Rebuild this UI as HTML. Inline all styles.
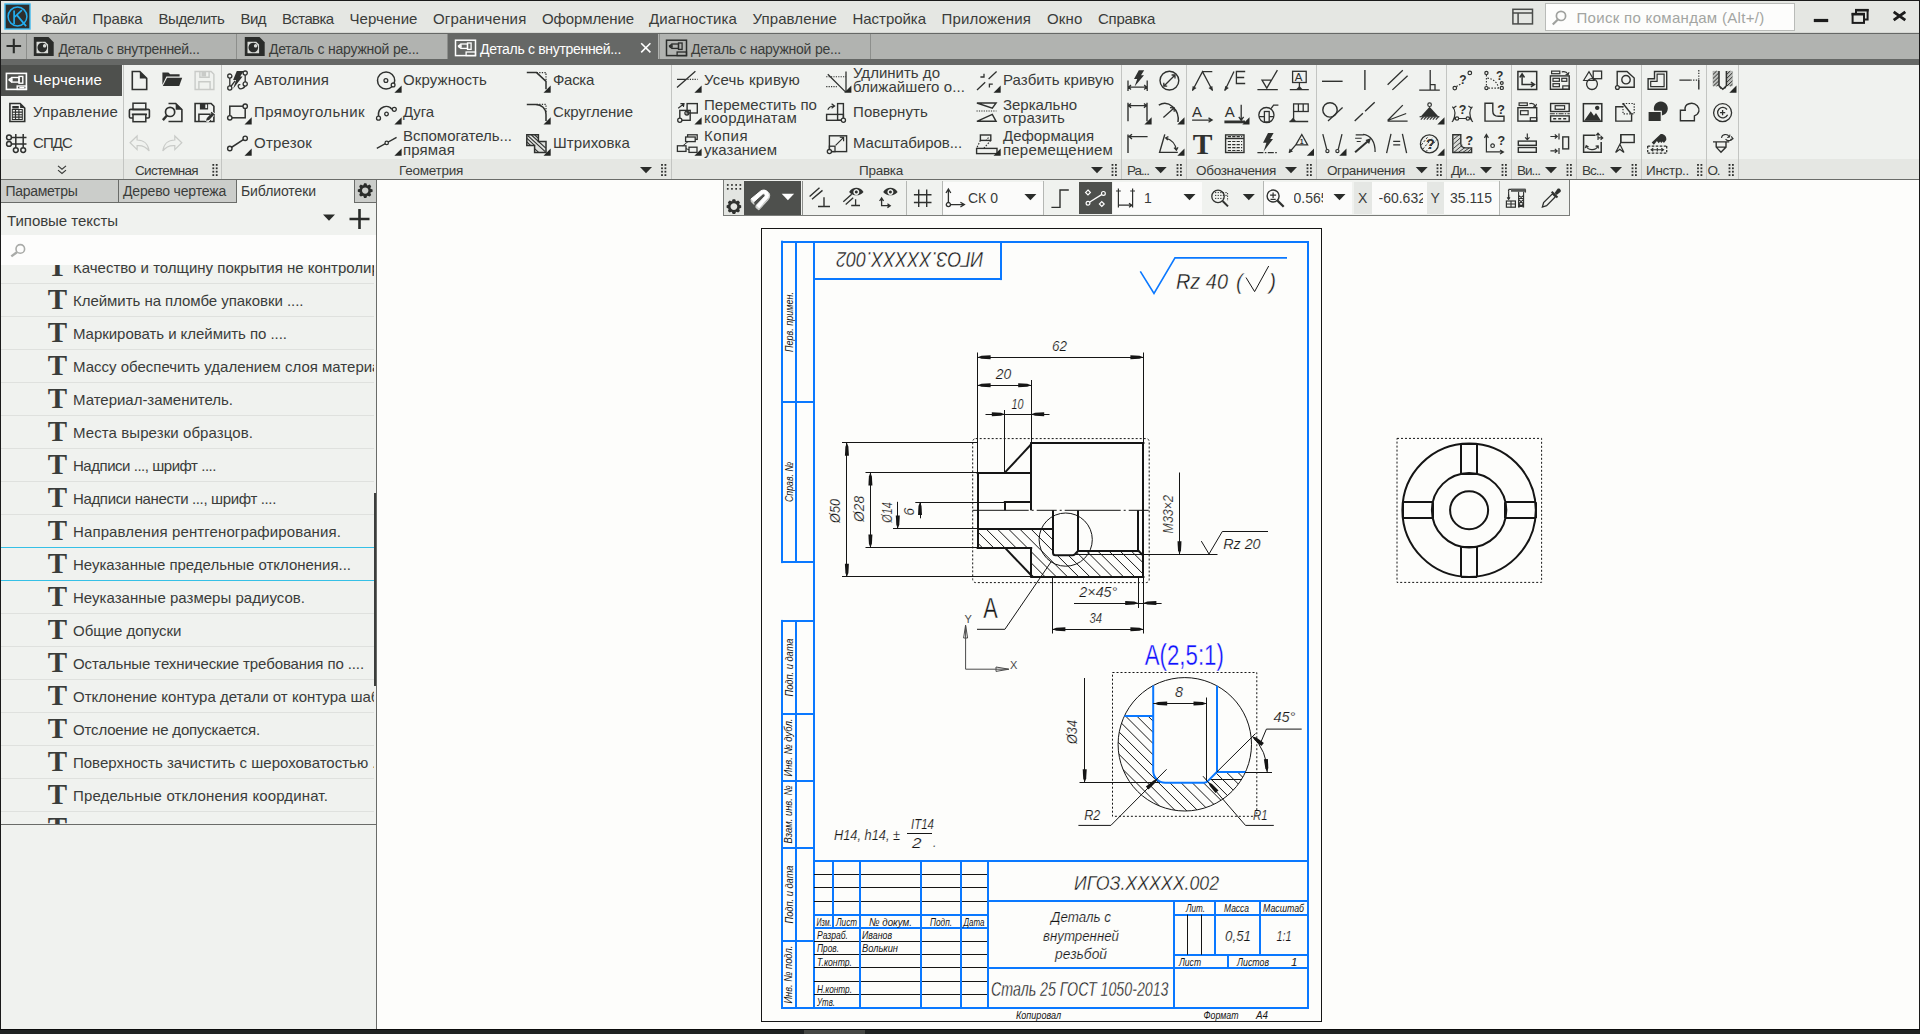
<!DOCTYPE html>
<html lang="ru"><head><meta charset="utf-8"><title>КОМПАС-3D</title>
<style>

html,body{margin:0;padding:0;}
body{width:1920px;height:1034px;overflow:hidden;position:relative;background:#fdfdfb;font-family:"Liberation Sans",sans-serif;}
.b{position:absolute;box-sizing:border-box;}
.t{position:absolute;white-space:pre;font-family:"Liberation Sans",sans-serif;}
.ic{position:absolute;overflow:visible;}
svg{display:block;}

</style></head>
<body>
<div class="b" style="left:0px;top:0px;width:1920px;height:34px;background:#e5e7e3;"></div>
<div class="b" style="left:0px;top:0px;width:1920px;height:1px;background:#1a1a1a;"></div>
<div class="b" style="left:0px;top:32px;width:1920px;height:1px;background:#d5d7d3;"></div>
<div class="b" style="left:0px;top:33px;width:1920px;height:1px;background:#666866;"></div>
<div class="b" style="left:1545px;top:3px;width:250px;height:28px;background:#fdfdfc;border:1px solid #b9bbb8;"></div>
<div class="b" style="left:0px;top:34px;width:1920px;height:25px;background:#b1b3b0;"></div>
<div class="b" style="left:447px;top:34px;width:211px;height:25px;background:#666866;"></div>
<div class="b" style="left:26px;top:34px;width:1px;height:25px;background:#8d8f8c;"></div>
<div class="b" style="left:236px;top:34px;width:1px;height:25px;background:#8d8f8c;"></div>
<div class="b" style="left:447px;top:34px;width:1px;height:25px;background:#8d8f8c;"></div>
<div class="b" style="left:659px;top:34px;width:1px;height:25px;background:#8d8f8c;"></div>
<div class="b" style="left:870px;top:34px;width:1px;height:25px;background:#8d8f8c;"></div>
<div class="b" style="left:0px;top:59px;width:1920px;height:6px;background:#666866;"></div>
<div class="b" style="left:0px;top:65px;width:1920px;height:115px;background:#f0f2ef;"></div>
<div class="b" style="left:0px;top:159px;width:1920px;height:20px;background:#e5e7e3;"></div>
<div class="b" style="left:1px;top:65px;width:121px;height:31px;background:#4e504d;"></div>
<div class="b" style="left:123px;top:65px;width:1px;height:114px;background:#c3c5c2;"></div>
<div class="b" style="left:221px;top:65px;width:1px;height:114px;background:#c3c5c2;"></div>
<div class="b" style="left:671px;top:65px;width:1px;height:114px;background:#c3c5c2;"></div>
<div class="b" style="left:1121px;top:65px;width:1px;height:114px;background:#c3c5c2;"></div>
<div class="b" style="left:1186px;top:65px;width:1px;height:114px;background:#c3c5c2;"></div>
<div class="b" style="left:1316px;top:65px;width:1px;height:114px;background:#c3c5c2;"></div>
<div class="b" style="left:1446px;top:65px;width:1px;height:114px;background:#c3c5c2;"></div>
<div class="b" style="left:1511px;top:65px;width:1px;height:114px;background:#c3c5c2;"></div>
<div class="b" style="left:1576px;top:65px;width:1px;height:114px;background:#c3c5c2;"></div>
<div class="b" style="left:1641px;top:65px;width:1px;height:114px;background:#c3c5c2;"></div>
<div class="b" style="left:1706px;top:65px;width:1px;height:114px;background:#c3c5c2;"></div>
<div class="b" style="left:1738px;top:65px;width:1px;height:114px;background:#c3c5c2;"></div>
<div class="b" style="left:0px;top:179px;width:1920px;height:1px;background:#6a6c69;"></div>
<div class="b" style="left:0px;top:180px;width:377px;height:849px;background:#f0f2ef;"></div>
<div class="b" style="left:0px;top:180px;width:377px;height:22px;background:#cbcdca;"></div>
<div class="b" style="left:237px;top:180px;width:117px;height:23px;background:#f0f2ef;"></div>
<div class="b" style="left:118px;top:180px;width:1px;height:22px;background:#6a6c69;"></div>
<div class="b" style="left:236px;top:180px;width:1px;height:22px;background:#6a6c69;"></div>
<div class="b" style="left:354px;top:180px;width:1px;height:22px;background:#6a6c69;"></div>
<div class="b" style="left:0px;top:202px;width:237px;height:1px;background:#6a6c69;"></div>
<div class="b" style="left:354px;top:202px;width:23px;height:1px;background:#6a6c69;"></div>
<div class="b" style="left:1px;top:235px;width:375px;height:30px;background:#fdfdfc;z-index:3;"></div>
<div class="b" style="left:1px;top:283px;width:373px;height:1px;background:#dfe1de;"></div>
<div class="b" style="left:1px;top:316px;width:373px;height:1px;background:#dfe1de;"></div>
<div class="b" style="left:1px;top:349px;width:373px;height:1px;background:#dfe1de;"></div>
<div class="b" style="left:1px;top:382px;width:373px;height:1px;background:#dfe1de;"></div>
<div class="b" style="left:1px;top:415px;width:373px;height:1px;background:#dfe1de;"></div>
<div class="b" style="left:1px;top:448px;width:373px;height:1px;background:#dfe1de;"></div>
<div class="b" style="left:1px;top:481px;width:373px;height:1px;background:#dfe1de;"></div>
<div class="b" style="left:1px;top:514px;width:373px;height:1px;background:#dfe1de;"></div>
<div class="b" style="left:1px;top:547px;width:373px;height:1px;background:#35c0e6;"></div>
<div class="b" style="left:1px;top:580px;width:373px;height:1px;background:#35c0e6;"></div>
<div class="b" style="left:1px;top:613px;width:373px;height:1px;background:#dfe1de;"></div>
<div class="b" style="left:1px;top:646px;width:373px;height:1px;background:#dfe1de;"></div>
<div class="b" style="left:1px;top:679px;width:373px;height:1px;background:#dfe1de;"></div>
<div class="b" style="left:1px;top:712px;width:373px;height:1px;background:#dfe1de;"></div>
<div class="b" style="left:1px;top:745px;width:373px;height:1px;background:#dfe1de;"></div>
<div class="b" style="left:1px;top:778px;width:373px;height:1px;background:#dfe1de;"></div>
<div class="b" style="left:1px;top:811px;width:373px;height:1px;background:#dfe1de;"></div>
<div class="b" style="left:374px;top:265px;width:2px;height:559px;background:#f0f2ef;"></div>
<div class="b" style="left:374px;top:493px;width:2px;height:193px;background:#3c3e3c;"></div>
<div class="b" style="left:0px;top:824px;width:377px;height:1px;background:#6a6c69;"></div>
<div class="b" style="left:376px;top:180px;width:1px;height:849px;background:#6a6c69;"></div>
<div class="b" style="left:0px;top:0px;width:1px;height:1029px;background:#1a1a1a;"></div>
<div class="b" style="left:1919px;top:0px;width:1px;height:1029px;background:#1a1a1a;"></div>
<div class="b" style="left:0px;top:1029px;width:1920px;height:5px;background:#1f2223;"></div>
<div class="b" style="left:0px;top:1029px;width:1920px;height:1px;background:#0c0c0c;"></div>
<div class="b" style="left:804px;top:1030px;width:61px;height:4px;background:#454745;"></div>
<div class="b" style="left:723px;top:180px;width:847px;height:36px;background:#f0f2ef;border-left:1px solid #7a7c79;border-right:1px solid #7a7c79;border-bottom:1px solid #7a7c79;z-index:5;"></div>
<div class="b" style="left:724px;top:180px;width:20px;height:35px;background:#e3e5e1;z-index:6;"></div>
<div class="b" style="left:744px;top:181px;width:57px;height:34px;background:#4e504d;z-index:6;"></div>
<div class="b" style="left:802px;top:181px;width:1px;height:34px;background:#8d8f8c;z-index:6;"></div>
<div class="b" style="left:1079px;top:182px;width:33px;height:32px;background:#4e504d;z-index:6;"></div>
<div class="b" style="left:906px;top:181px;width:1px;height:34px;background:#b5b7b4;z-index:6;"></div>
<div class="b" style="left:942px;top:181px;width:1px;height:34px;background:#b5b7b4;z-index:6;"></div>
<div class="b" style="left:1043px;top:181px;width:1px;height:34px;background:#b5b7b4;z-index:6;"></div>
<div class="b" style="left:1263px;top:181px;width:1px;height:34px;background:#b5b7b4;z-index:6;"></div>
<div class="b" style="left:1499px;top:181px;width:1px;height:34px;background:#b5b7b4;z-index:6;"></div>
<div class="b" style="left:943px;top:182px;width:100px;height:32px;background:#fbfbfa;z-index:6;"></div>
<div class="b" style="left:1113px;top:182px;width:89px;height:32px;background:#fbfbfa;z-index:6;"></div>
<div class="b" style="left:1203px;top:182px;width:60px;height:32px;background:#f0f2ef;z-index:6;"></div>
<div class="b" style="left:1264px;top:182px;width:88px;height:32px;background:#fbfbfa;z-index:6;"></div>
<div class="b" style="left:1354px;top:182px;width:18px;height:32px;background:#e5e7e4;z-index:6;"></div>
<div class="b" style="left:1372px;top:182px;width:55px;height:32px;background:#fbfbfa;z-index:6;"></div>
<div class="b" style="left:1427px;top:182px;width:17px;height:32px;background:#e5e7e4;z-index:6;"></div>
<div class="b" style="left:1444px;top:182px;width:55px;height:32px;background:#fbfbfa;z-index:6;"></div>
<svg class="b" style="left:0;top:0;z-index:2" width="1920" height="182" viewBox="0 0 1920 182"><g transform="translate(17.5 16.5)"><rect x="-12.5" y="-12.5" width="25" height="25" fill="#2d2f2e" stroke="#3db8ee" stroke-width="1.4"/><circle cx="0" cy="0" r="9.4" stroke="#23aef0" stroke-width="1.5" fill="none"/><path d="M-3.4 -6 V7.6 M-3.4 1 L4.4 -6.4 M-0.6 -1.4 L8.6 9.6" stroke="#23aef0" stroke-width="1.7" fill="none" /></g><g transform="translate(1522.5 16.5)"><rect x="-9.6" y="-7.2" width="19.6" height="14.6" stroke="#4a4c4a" stroke-width="1.5" fill="none" /><path d="M-9.6 -3.4 H10 M-4.4 -3.4 V7.4" stroke="#4a4c4a" stroke-width="1.5" fill="none" /></g><g transform="translate(1559 17.5)"><circle cx="2" cy="-1.6" r="4.6" stroke="#9fa19e" stroke-width="1.7" fill="none"/><path d="M-1.4 2.2 L-6.2 7" stroke="#9fa19e" stroke-width="2.2" fill="none" /></g><g transform="translate(1821 20.5)"><path d="M-7.2 -1.6 H7.2 V1.6 H-7.2 Z" fill="#1c1c1c"/></g><g transform="translate(1860 16.5)"><rect x="-7.4" y="-2.6" width="11.4" height="9" stroke="#1c1c1c" stroke-width="2" fill="none" /><path d="M-4 -3 V-6.6 H7.6 V3 H4.6" stroke="#1c1c1c" stroke-width="2" fill="none" /><path d="M-5 -7.6 H8.6 V-5 H-5 Z" fill="#1c1c1c"/><path d="M-8.4 -3.6 H5 V-1 H-8.4 Z" fill="#1c1c1c"/></g><g transform="translate(1899.5 16)"><path d="M-5.8 -4.2 L5.8 4.2 M5.8 -4.2 L-5.8 4.2" stroke="#1c1c1c" stroke-width="2.8" fill="none" /></g><g transform="translate(13.8 46)"><path d="M-7.3 0 H7.3 M0 -7.3 V7.3" stroke="#2a2c2a" stroke-width="2.1" fill="none" /></g><g transform="translate(43.7 46.5)"><path d="M-9.9 -9.5 H4.8 L10 -4.3 V9.5 H-9.9 Z" fill="#2a2c2a"/><path d="M-7.2 -4.8 H1.6 L4.4 -2 V6.8 H-7.2 Z" fill="#d9dbd8"/><path d="M-1.4 -3.8 a4.8 4.8 0 1 0 0.01 0 Z" fill="#2a2c2a"/><path d="M0.9 -2.4 a1.7 1.7 0 1 0 0.01 0 Z" fill="#d9dbd8"/></g><g transform="translate(254.7 46.5)"><path d="M-9.9 -9.5 H4.8 L10 -4.3 V9.5 H-9.9 Z" fill="#2a2c2a"/><path d="M-7.2 -4.8 H1.6 L4.4 -2 V6.8 H-7.2 Z" fill="#d9dbd8"/><path d="M-1.4 -3.8 a4.8 4.8 0 1 0 0.01 0 Z" fill="#2a2c2a"/><path d="M0.9 -2.4 a1.7 1.7 0 1 0 0.01 0 Z" fill="#d9dbd8"/></g><g transform="translate(465.5 47.8)"><rect x="-10" y="-7.6" width="20" height="15.4" stroke="#ffffff" stroke-width="1.5" fill="none" /><path d="M-7.6 -1.6 L-4.8 -3.6 M-7.6 -1.6 L-4.8 0.4 M-7.6 -1.6 H-4" stroke="#ffffff" stroke-width="1.2" fill="none" /><rect x="-4.6" y="-3.8" width="6.6" height="4.4" stroke="#ffffff" stroke-width="1.3" fill="none" /><rect x="2" y="-4.8" width="3.6" height="6.4" stroke="#ffffff" stroke-width="1.3" fill="none" /><rect x="0.6" y="4.2" width="9.4" height="3.6" stroke="#ffffff" stroke-width="1.3" fill="none" /></g><g transform="translate(676.5 47.8)"><rect x="-10" y="-7.6" width="20" height="15.4" stroke="#2a2c2a" stroke-width="1.5" fill="none" /><path d="M-7.6 -1.6 L-4.8 -3.6 M-7.6 -1.6 L-4.8 0.4 M-7.6 -1.6 H-4" stroke="#2a2c2a" stroke-width="1.2" fill="none" /><rect x="-4.6" y="-3.8" width="6.6" height="4.4" stroke="#2a2c2a" stroke-width="1.3" fill="none" /><rect x="2" y="-4.8" width="3.6" height="6.4" stroke="#2a2c2a" stroke-width="1.3" fill="none" /><rect x="0.6" y="4.2" width="9.4" height="3.6" stroke="#2a2c2a" stroke-width="1.3" fill="none" /></g><g transform="translate(645.8 47.8)"><path d="M-4.6 -4.6 L4.6 4.6 M4.6 -4.6 L-4.6 4.6" stroke="#ffffff" stroke-width="1.6" fill="none" /></g><g transform="translate(16.4 81.4)"><rect x="-10" y="-8" width="20" height="16" stroke="#ffffff" stroke-width="1.6" fill="none" /><path d="M-7.8 -1.6 L-4.6 -3.9 M-7.8 -1.6 L-4.6 0.7 M-7.8 -1.6 L-4 -1.6" stroke="#ffffff" stroke-width="1.3" fill="none" /><rect x="-4.6" y="-3.9" width="7.2" height="4.6" stroke="#ffffff" stroke-width="1.4" fill="none" /><rect x="2.6" y="-5" width="3.8" height="6.8" stroke="#ffffff" stroke-width="1.4" fill="none" /><rect x="0.8" y="4.6" width="9.2" height="3.4" stroke="#ffffff" stroke-width="1.4" fill="none" /><path d="M3 6.3 L8 6.3" stroke="#ffffff" stroke-width="1.4" fill="none" /></g><g transform="translate(17.3 112.5)"><path d="M-7.4 -9 L2.8 -9 L7.4 -4.4 L7.4 9 L-7.4 9 Z" stroke="#2f312f" stroke-width="1.6" fill="none" /><path d="M2.8 -9 L7.4 -4.4 L2.8 -4.4 Z" fill="#2f312f"/><path d="M-5 -6.5 H1.5 V-4 H-5 Z" fill="#2f312f"/><rect x="-5" y="-3" width="10" height="10" stroke="#2f312f" stroke-width="1" fill="none" /><path d="M-5 -0.4 H5 M-5 2.2 H5 M-5 4.6 H5 M-1.8 -3 V7 M1.6 -3 V7" stroke="#2f312f" stroke-width="1.1" fill="none" /></g><g transform="translate(16.5 143.3)"><path d="M-0.7 -9.3 V4.3 M6.7 -9.3 V4.3 M-5 -5.9 H10 M-5 0.6 H10" stroke="#2f312f" stroke-width="1.5" fill="none" /><circle cx="-7.5" cy="-5.9" r="2.4" stroke="#2f312f" stroke-width="1.5" fill="none"/><circle cx="-7.5" cy="0.6" r="2.4" stroke="#2f312f" stroke-width="1.5" fill="none"/><circle cx="-0.7" cy="6.8" r="2.4" stroke="#2f312f" stroke-width="1.5" fill="none"/><circle cx="6.7" cy="6.8" r="2.4" stroke="#2f312f" stroke-width="1.5" fill="none"/></g><g transform="translate(62 169.5)"><path d="M-4 -3.6 L0 -0.2 L4 -3.6 M-4 0.6 L0 4 L4 0.6" stroke="#3a3c3a" stroke-width="1.2" fill="none" /></g><g transform="translate(139.5 80.5)"><path d="M-7.2 -9 L0.3 -9 L7.2 -2.1 L7.2 9 L-7.2 9 Z" stroke="#2f312f" stroke-width="1.6" fill="none" /><path d="M0.3 -9 L7.2 -2.1 L0.3 -2.1 Z" fill="#2f312f"/></g><g transform="translate(172 79.2)"><path d="M-9.6 -6.8 L-3.6 -6.8 L-1.8 -4.9 L7.6 -4.9 L7.6 -2.6 L-5.6 -2.6 L-9.6 5.6 Z" fill="#2f312f"/><path d="M-4.9 -1.4 L10.2 -1.4 L7.2 6.7 L-9.2 6.7 Z" fill="#2f312f"/></g><g transform="translate(204.5 80.5)"><path d="M-9.4 -9 L6.6 -9 L9.4 -6.2 L9.4 9 L-9.4 9 Z" stroke="#c9cbc8" stroke-width="1.4" fill="none" /><path d="M-4.6 -9 V-3.2 H4.6 V-9" stroke="#c9cbc8" stroke-width="1.4" fill="none" /><path d="M-3 -9 H1.6 V-4 H-3 Z" fill="#c9cbc8"/><path d="M-5.6 9 V1.2 H5.6 V9" stroke="#c9cbc8" stroke-width="1.4" fill="none" /></g><g transform="translate(139.4 112.4)"><rect x="-6.4" y="-9.2" width="12.8" height="6.4" stroke="#2f312f" stroke-width="1.5" fill="none" /><rect x="-10" y="-3" width="20" height="8.6" stroke="#2f312f" stroke-width="1.6" fill="none" rx="1.2"/><rect x="-6.4" y="2" width="12.8" height="7.3" stroke="#2f312f" stroke-width="1.5" fill="#f0f2ef" /><path d="M-7.6 2 H7.6" stroke="#2f312f" stroke-width="1.5" fill="none" /></g><g transform="translate(172.5 112.5)"><path d="M-4 -9 L3.2 -9 L9.4 -2.8 L9.4 9 L-4 9" stroke="#2f312f" stroke-width="1.6" fill="none" /><path d="M3.2 -9 L9.4 -2.8 L3.2 -2.8 Z" fill="#2f312f"/><circle cx="-2.4" cy="-0.6" r="4.6" stroke="#2f312f" stroke-width="1.7" fill="#f0f2ef"/><path d="M-5.6 3 L-9.6 7.6" stroke="#2f312f" stroke-width="2.4" fill="none" /></g><g transform="translate(204.5 112.5)"><path d="M-9.4 -9 L6.6 -9 L9.4 -6.2 L9.4 9 L-9.4 9 Z" stroke="#2f312f" stroke-width="1.6" fill="none" /><path d="M-4.6 -9 H3.6 V-3 H-4.6 Z" fill="#2f312f"/><path d="M0.8 -8 H2.6 V-4.4 H0.8 Z" fill="#f0f2ef"/><path d="M-5.6 9 V1.8 H5.6 V9" stroke="#2f312f" stroke-width="1.5" fill="none" /><path d="M1 8 L3.6 9.6 L10.6 1.6 L8 -0.4 Z" stroke="#f0f2ef" stroke-width="1" fill="#f0f2ef" /><path d="M1.4 8.2 L2.4 5.4 L7.4 0.2 L9.6 2.2 L4.6 7.6 Z" fill="#2f312f"/><path d="M6.6 -0.4 L10.2 2.8" stroke="#2f312f" stroke-width="1.2" fill="none" /></g><g transform="translate(139.7 143.6)"><path d="M-9.6 -0.8 L-2.6 -7.6 L-2.6 -3.6 C4 -3.6 8.6 0.6 9.4 7.4 C6 2.6 2 1.6 -2.6 2 L-2.6 6 Z" stroke="#c9cbc8" stroke-width="1.2" fill="none" /></g><g transform="translate(172.2 143.6)"><path d="M9.6 -0.8 L2.6 -7.6 L2.6 -3.6 C-4 -3.6 -8.6 0.6 -9.4 7.4 C-6 2.6 -2 1.6 2.6 2 L2.6 6 Z" stroke="#c9cbc8" stroke-width="1.2" fill="none" /></g><g transform="translate(237.5 80.3)"><path d="M-7.7 -4.2 V7.7 M-7.7 7.7 L-2.4 0.6 M7.7 -7.2 V3.7 M7.7 3.7 C7.9 8.2 2.8 10 1 7 C0 5.2 1.2 3.8 2.8 4.6" stroke="#2f312f" stroke-width="1.3" fill="none" /><path d="M-0.7 -9.2 L6.3 -9.2 L2.7 -3.9 L5.1 -3.9 L-4.4 8.5 L-1.4 -0.4 L-4.4 -0.4 Z" fill="#2f312f"/><circle cx="-7.7" cy="-4.2" r="2.1" stroke="#2f312f" stroke-width="1.3" fill="#f0f2ef"/><circle cx="-7.7" cy="7.7" r="2.1" stroke="#2f312f" stroke-width="1.3" fill="#f0f2ef"/><circle cx="7.7" cy="-7.2" r="2.1" stroke="#2f312f" stroke-width="1.3" fill="#f0f2ef"/><circle cx="7.7" cy="3.7" r="2.1" stroke="#2f312f" stroke-width="1.3" fill="#f0f2ef"/></g><g transform="translate(237.5 112)"><rect x="-7.7" y="-5.8" width="15.4" height="11.6" stroke="#2f312f" stroke-width="1.5" fill="none" /><circle cx="7.7" cy="-5.8" r="2.2" stroke="#2f312f" stroke-width="1.4" fill="#f0f2ef"/><circle cx="-7.7" cy="5.8" r="2.2" stroke="#2f312f" stroke-width="1.4" fill="#f0f2ef"/></g><g transform="translate(237.5 143.4)"><path d="M-7.7 5.1 L7.7 -5.1" stroke="#2f312f" stroke-width="1.5" fill="none" /><circle cx="7.7" cy="-5.1" r="2.2" stroke="#2f312f" stroke-width="1.4" fill="#f0f2ef"/><circle cx="-7.7" cy="5.1" r="2.2" stroke="#2f312f" stroke-width="1.4" fill="#f0f2ef"/></g><g transform="translate(386.1 80.5)"><circle cx="0" cy="0" r="8.6" stroke="#2f312f" stroke-width="1.5" fill="none"/><circle cx="-0.2" cy="0" r="1.9" stroke="#2f312f" stroke-width="1.3" fill="none"/><circle cx="7" cy="4.4" r="1.9" stroke="#2f312f" stroke-width="1.3" fill="#f0f2ef"/></g><g transform="translate(386.5 114)"><path d="M-8 2 C-9 -8 2 -10 5.4 -4.6" stroke="#2f312f" stroke-width="1.5" fill="none" /><circle cx="-8" cy="4.2" r="2" stroke="#2f312f" stroke-width="1.3" fill="#f0f2ef"/><circle cx="7.8" cy="-4.7" r="2" stroke="#2f312f" stroke-width="1.3" fill="#f0f2ef"/><circle cx="0" cy="0" r="1.8" stroke="#2f312f" stroke-width="1.3" fill="none"/></g><g transform="translate(386.7 143.2)"><path d="M-9.9 5.2 L9.9 -5.8" stroke="#2f312f" stroke-width="1.3" fill="none" /><circle cx="0" cy="-0.3" r="1.7" stroke="#2f312f" stroke-width="1.2" fill="#f0f2ef"/></g><g transform="translate(536.6 80.6)"><path d="M-9.8 -8 H0 L9.4 0.8 V8.6" stroke="#2f312f" stroke-width="1.5" fill="none" /><path d="M0 -8 H9.4 V0.8" stroke="#2f312f" stroke-width="1.2" fill="none" stroke-dasharray="1.3 1.3"/></g><g transform="translate(536.6 112.4)"><path d="M-9.8 -8 H-1 C5 -8 9.4 -3.6 9.4 2 V8.6" stroke="#2f312f" stroke-width="1.5" fill="none" /><path d="M0 -8 H9.4 V0.8" stroke="#2f312f" stroke-width="1.2" fill="none" stroke-dasharray="1.3 1.3"/></g><g transform="translate(536.4 143.6)"><path d="M-9.6 -8.8 H2 V-2 H9.6 V8.8 H-1.8 V2 H-9.6 Z" stroke="#2f312f" stroke-width="1.5" fill="#dfe1de" /><path d="M-8.6 -8 L8.8 8 M-5 -8.6 L9.4 4.6 M-1.6 -8.6 L2 -5.2 M-9.4 -5.2 L-1.6 2 M-9.4 -1.6 L-5.6 2 M-1.6 5.2 L2 8.6" stroke="#2f312f" stroke-width="1.1" fill="none" /></g><path d="M251.7 117.3 V124.5 H244.5 Z" fill="#252725"/><path d="M251.7 148.5 V155.7 H244.5 Z" fill="#252725"/><path d="M401.6 85.5 V92.7 H394.40000000000003 Z" fill="#252725"/><path d="M401.6 117.3 V124.5 H394.40000000000003 Z" fill="#252725"/><path d="M401.6 148.5 V155.7 H394.40000000000003 Z" fill="#252725"/><path d="M550.7 85.5 V92.7 H543.5 Z" fill="#252725"/><path d="M550.7 117.3 V124.5 H543.5 Z" fill="#252725"/><path d="M550.7 148.5 V155.7 H543.5 Z" fill="#252725"/><g transform="translate(687 80.4)"><path d="M-10 -1 H-0.4 M-10 7.2 L8.4 -9.2" stroke="#2f312f" stroke-width="1.3" fill="none" /><path d="M0.4 -1 H10.6" stroke="#2f312f" stroke-width="1.1" fill="none" stroke-dasharray="1.2 1.2"/></g><g transform="translate(688 112)"><rect x="-0.9" y="-8.4" width="10.2" height="9.4" stroke="#2f312f" stroke-width="1.4" fill="none" /><rect x="-8.2" y="-1.6" width="10.4" height="9.9" stroke="#2f312f" stroke-width="1.4" fill="none" /><circle cx="-8.2" cy="8.3" r="2.1" stroke="#2f312f" stroke-width="1.3" fill="#f0f2ef"/><circle cx="-1.1" cy="1" r="2" stroke="#2f312f" stroke-width="1.3" fill="none"/><path d="M-9.8 -3.8 L-4.4 -8 M-7.6 -8.4 L-4 -8.4 L-4.6 -5" stroke="#2f312f" stroke-width="1.2" fill="none" /></g><g transform="translate(687.4 143.6)"><rect x="0.2" y="-8.8" width="9.6" height="4.6" stroke="#2f312f" stroke-width="1.3" fill="none" /><rect x="-1.8" y="-6.6" width="9.6" height="4.6" stroke="#2f312f" stroke-width="1.3" fill="#f0f2ef" /><rect x="-10" y="2.2" width="8.6" height="5.6" stroke="#2f312f" stroke-width="1.3" fill="none" /><rect x="1.6" y="3.6" width="8" height="5.2" stroke="#2f312f" stroke-width="1.3" fill="none" /><path d="M0.6 -2 L-4.6 2.2 M-1.4 5 L1.6 6.2" stroke="#2f312f" stroke-width="1" fill="none" /></g><g transform="translate(836.2 80.6)"><path d="M9.8 -9.2 V11.4 M-8.4 -6.4 L9 11" stroke="#2f312f" stroke-width="1.3" fill="none" /><path d="M-10 -3.8 H9.8 M-10 6 H0.6" stroke="#2f312f" stroke-width="1.1" fill="none" stroke-dasharray="1.2 1.2"/></g><g transform="translate(836 112)"><rect x="1.6" y="-8.4" width="5.8" height="16.7" stroke="#2f312f" stroke-width="1.4" fill="none" /><rect x="-9.4" y="2.4" width="16.8" height="5.9" stroke="#2f312f" stroke-width="1.4" fill="none" /><circle cx="7.4" cy="8.3" r="2.1" stroke="#2f312f" stroke-width="1.3" fill="#f0f2ef"/><path d="M-8.2 -2.2 C-7 -5 -4.6 -6 -1.6 -6 M-4.4 -8.2 L-1.4 -6 L-4.4 -3.8" stroke="#2f312f" stroke-width="1.2" fill="none" /></g><g transform="translate(838 143.6)"><rect x="-8.6" y="-7.8" width="17.2" height="15.8" stroke="#2f312f" stroke-width="1.4" fill="none" /><rect x="-8.6" y="2.6" width="5.6" height="5.4" stroke="#2f312f" stroke-width="1.3" fill="none" /><circle cx="-8.6" cy="8" r="2.1" stroke="#2f312f" stroke-width="1.3" fill="#f0f2ef"/><path d="M-2.4 1.8 L5.4 -6 M1.8 -6.4 L5.6 -6.2 L5.6 -2.4" stroke="#2f312f" stroke-width="1.2" fill="none" /></g><g transform="translate(986.8 80.6)"><path d="M-9.8 9.4 L-1.6 1.6 M1.8 -1.6 L9.8 -9 M-6.4 -3.6 H-2.8 V-6.8 M6 3.6 H2.6 V6.8" stroke="#2f312f" stroke-width="1.3" fill="none" /></g><g transform="translate(986.5 112)"><path d="M-9.6 -9 H9.6 L5.8 -3.9 Z M-9.6 9.3 H9.6 L5.8 2.4 Z" stroke="#2f312f" stroke-width="1.4" fill="none" /><path d="M-10 -1 H10" stroke="#2f312f" stroke-width="1.1" fill="none" stroke-dasharray="1.2 1.2"/></g><g transform="translate(986.8 143.6)"><rect x="-6.4" y="-8.6" width="10.4" height="5.4" stroke="#2f312f" stroke-width="1.4" fill="none" /><rect x="-10.2" y="4.8" width="20.4" height="5.2" stroke="#2f312f" stroke-width="1.4" fill="none" /><path d="M-6.4 -3.2 L-10.2 4.8 M4 -3.2 L-3 4.8 M1.8 -6 L-0.6 -3.6" stroke="#2f312f" stroke-width="1.1" fill="none" stroke-dasharray="1.6 1.4"/></g><path d="M701.6 85.5 V92.7 H694.4 Z" fill="#252725"/><path d="M701.6 117.3 V124.5 H694.4 Z" fill="#252725"/><path d="M701.6 148.5 V155.7 H694.4 Z" fill="#252725"/><path d="M851.4 85.5 V92.7 H844.1999999999999 Z" fill="#252725"/><path d="M1000.7 85.5 V92.7 H993.5 Z" fill="#252725"/><path d="M1000.7 148.5 V155.7 H993.5 Z" fill="#252725"/><g transform="translate(1137.6 80.6)"><path d="M1.2 -10.4 L6.6 -10.4 L3.4 -5.4 L6.4 -5.4 L-3 6 L-0.4 -1.6 L-3.6 -1.6 Z" fill="#2f312f"/><path d="M-9.6 0 V10.4 M9.6 0 V10.4 M-9.6 6.6 H9.6 M-6.6 4.4 L-9 6.6 L-6.6 8.8 M6.6 4.4 L9 6.6 L6.6 8.8" stroke="#2f312f" stroke-width="1.3" fill="none" /></g><g transform="translate(1169.4 80.6)"><circle cx="0" cy="0" r="9.4" stroke="#2f312f" stroke-width="1.4" fill="none"/><path d="M-5.4 5.4 L5.4 -5.4 M-5.6 2.2 V5.6 H-2.2 M5.6 -2.2 V-5.6 H2.2" stroke="#2f312f" stroke-width="1.3" fill="none" /></g><g transform="translate(1137.6 112.4)"><path d="M-9.6 -9.6 V8.8 M9.4 -9.6 V8.8 M-9.6 -6.8 H9.4 M-6.6 -9 L-9 -6.8 L-6.6 -4.6 M6.4 -9 L8.8 -6.8 L6.4 -4.6" stroke="#2f312f" stroke-width="1.4" fill="none" /></g><g transform="translate(1169.4 112.4)"><path d="M-10.6 -7.2 C-1 -13 10.4 -3 8.6 9.6" stroke="#2f312f" stroke-width="1.5" fill="none" /><path d="M-6 5 L4.6 -4.4 M0.6 -4.8 L4.8 -4.6 L4.8 -0.6" stroke="#2f312f" stroke-width="1.3" fill="none" /></g><g transform="translate(1137.6 143.6)"><path d="M-9.6 -9 V9.4 M-9.6 -7 H10 M-5.6 -9.4 L-8.6 -7 L-5.6 -4.6" stroke="#2f312f" stroke-width="1.4" fill="none" /></g><g transform="translate(1169.4 143.6)"><path d="M-4.6 -9.2 L-9.8 8.8 H8.4" stroke="#2f312f" stroke-width="1.4" fill="none" /><path d="M-3.6 -5.6 C2 -4 6 0.6 7 6.4 M-1 -7 L-3.8 -5.6 L-1.6 -3.4 M4.6 4 L7 6.6 L8.6 3.6" stroke="#2f312f" stroke-width="1.2" fill="none" /></g><path d="M1151.6 117.3 V124.5 H1144.3999999999999 Z" fill="#252725"/><path d="M1184.5 117.3 V124.5 H1177.3 Z" fill="#252725"/><path d="M1184.5 148.5 V155.7 H1177.3 Z" fill="#252725"/><g transform="translate(1202.5 80.5)"><path d="M-10 10 L0 -8.8 L10 10 M0 -8.8 H9.8" stroke="#2f312f" stroke-width="1.3" fill="none" /><path d="M-10.4 10.6 L-9.8 5.4 L-6 7.6 Z" fill="#2f312f"/><path d="M10.4 10.6 L9.8 5.4 L6 7.6 Z" fill="#2f312f"/></g><g transform="translate(1234.8 80.5)"><path d="M-0.8 -9 L-10 10" stroke="#2f312f" stroke-width="1.3" fill="none" /><path d="M-10.4 10.6 L-9.6 5.4 L-6 7.4 Z" fill="#2f312f"/><path d="M10.4 -9 H1.6 V3 H10.4 M1.6 -3 H9.4" stroke="#2f312f" stroke-width="1.3" fill="none" /></g><g transform="translate(1267.4 80.5)"><path d="M-5.4 -0.4 H4 L-0.6 7.6 Z M-0.6 7.6 L10 -10.4 M-10 9.2 H10.4" stroke="#2f312f" stroke-width="1.3" fill="none" /></g><g transform="translate(1299.2 80.5)"><rect x="-6.6" y="-9.2" width="13.6" height="11.2" stroke="#2f312f" stroke-width="1.3" fill="none" /><text x="-4.4" y="0.4" font-size="11.5" fill="#2f312f" font-family="'Liberation Sans', sans-serif" >A</text><path d="M0.2 2 V6.4 M-9.4 9.2 H9.6" stroke="#2f312f" stroke-width="1.3" fill="none" /><path d="M-3.4 9.2 L0.2 5.4 L3.8 9.2 Z" fill="#2f312f"/></g><g transform="translate(1202.5 112.3)"><text x="-10.6" y="4.4" font-size="15" fill="#2f312f" font-family="'Liberation Sans', sans-serif" >A</text><path d="M-10.4 7.8 H9.2 M6 5.6 L9.6 7.8 L6 10" stroke="#2f312f" stroke-width="1.3" fill="none" /></g><g transform="translate(1234.8 112.3)"><text x="-10" y="4.4" font-size="15" fill="#2f312f" font-family="'Liberation Sans', sans-serif" >A</text><path d="M6.4 -7.6 V7 M4 4.6 L6.4 8 L8.8 4.6" stroke="#2f312f" stroke-width="1.3" fill="none" /><path d="M-10.4 8.2 H10.2 V11 H-10.4 Z" fill="#2f312f"/></g><g transform="translate(1267.4 112.3)"><circle cx="-1" cy="2.8" r="7.6" stroke="#2f312f" stroke-width="1.3" fill="none"/><rect x="-3" y="-0.8" width="4.8" height="10.4" stroke="#2f312f" stroke-width="1.3" fill="#f0f2ef" /><path d="M-8.4 4.4 H-3 M1.8 4.4 H6.4" stroke="#2f312f" stroke-width="1.2" fill="none" /><path d="M3.6 -3.6 L6.2 -7.2 H11" stroke="#2f312f" stroke-width="1.3" fill="none" /></g><g transform="translate(1299.2 112.3)"><rect x="-5.6" y="-8.4" width="14.6" height="7.6" stroke="#2f312f" stroke-width="1.3" fill="none" /><path d="M-0.8 -8.4 V-0.8 M4 -8.4 V-0.8 M-5.6 -0.8 V9 M-9.8 9.2 H9" stroke="#2f312f" stroke-width="1.3" fill="none" /><path d="M-9.6 9.2 L-6.2 5.4 L-2.8 9.2 Z" fill="#2f312f"/></g><g transform="translate(1202.5 143.5)"><text x="0" y="10.2" font-size="29.5" font-weight="bold" text-anchor="middle" fill="#2f312f" font-family="'Liberation Serif', serif">T</text></g><g transform="translate(1234.8 143.5)"><rect x="-9.2" y="-8.6" width="18.4" height="17.6" stroke="#2f312f" stroke-width="1.4" fill="none" /><path d="M-9.2 -5 H9.2" stroke="#2f312f" stroke-width="1.4" fill="none" /><path d="M-7 -2 H7.4 M-7 1.2 H7.4 M-7 4.2 H7.4 M-7 7 H7.4" stroke="#2f312f" stroke-width="1.2" fill="none" stroke-dasharray="3.2 1.2"/><path d="M-7 -6.8 H7.4" stroke="#2f312f" stroke-width="1.2" fill="none" stroke-dasharray="3.2 1.2"/></g><g transform="translate(1267.4 143.5)"><path d="M0.6 -10.4 L6.2 -10.4 L2.8 -4.6 L5.6 -4.6 L-3.8 8 L-1 -0.8 L-4.4 -0.8 Z" fill="#2f312f"/><path d="M-10 9.2 H10" stroke="#2f312f" stroke-width="1.2" fill="none" stroke-dasharray="6 1.4 1.6 1.4"/></g><g transform="translate(1299.2 143.5)"><path d="M-3.4 1.4 H8.4 L2.6 -9 Z M-3.4 1.4 L-10 9" stroke="#2f312f" stroke-width="1.3" fill="none" /><path d="M-10.6 9.6 L-9.6 5 L-6.2 8 Z" fill="#2f312f"/><text x="0.6" y="0.4" font-size="7" fill="#2f312f" font-family="'Liberation Sans', sans-serif" font-weight="bold">1</text></g><path d="M1249.5 117.3 V124.5 H1242.3 Z" fill="#252725"/><path d="M1314 148.5 V155.7 H1306.8 Z" fill="#252725"/><g transform="translate(1332.4 80.5)"><path d="M-10.4 0.8 H10.2" stroke="#2f312f" stroke-width="1.4" fill="none" /></g><g transform="translate(1364.7 80.5)"><path d="M0.2 -10.4 V9.4" stroke="#2f312f" stroke-width="1.4" fill="none" /></g><g transform="translate(1397 80.5)"><path d="M-9.4 4.2 L5.8 -10.2 M-4.6 9.4 L10.6 -4.8" stroke="#2f312f" stroke-width="1.3" fill="none" /></g><g transform="translate(1429.4 80.5)"><path d="M0.8 -10.4 V9.4 M-10.2 9.6 H10.4 M0.8 4.2 H5.6 V9.4" stroke="#2f312f" stroke-width="1.3" fill="none" /></g><g transform="translate(1332.4 112.3)"><circle cx="-2.4" cy="-2.4" r="7.2" stroke="#2f312f" stroke-width="1.4" fill="none"/><path d="M-4.4 8.6 L10.2 -4.8" stroke="#2f312f" stroke-width="1.3" fill="none" /></g><g transform="translate(1364.7 112.3)"><path d="M-10 8.6 L-1.8 1 M0.4 -1 L10 -10" stroke="#2f312f" stroke-width="1.4" fill="none" /></g><g transform="translate(1397 112.3)"><path d="M-9.4 8.2 L5.8 -7.2 M-9.4 8.2 L9.2 1.2 M-9.4 8.8 H10.6" stroke="#2f312f" stroke-width="1.3" fill="none" /></g><g transform="translate(1429.4 112.3)"><circle cx="0.2" cy="-7.6" r="1.8" stroke="#2f312f" stroke-width="1.2" fill="none"/><path d="M-8.2 3.6 L0.2 -5.6 L8.6 3.6 Z" fill="#2f312f"/><path d="M-9.8 4.4 H10" stroke="#2f312f" stroke-width="1.2" fill="none" /><path d="M-8.6 7.4 L-6 4.6 M-5.6 7.4 L-3 4.6 M-2.6 7.4 L0 4.6 M0.4 7.4 L3 4.6 M3.4 7.4 L6 4.6 M6.4 7.4 L9 4.6" stroke="#2f312f" stroke-width="1.1" fill="none" /></g><g transform="translate(1332.4 143.5)"><path d="M-9.6 -9.4 L-5.6 6.2 M9.6 -9.4 L5.8 6.2" stroke="#2f312f" stroke-width="1.3" fill="none" /><circle cx="-5" cy="7.6" r="1.6" stroke="#2f312f" stroke-width="1.2" fill="none"/><circle cx="5" cy="7.6" r="1.6" stroke="#2f312f" stroke-width="1.2" fill="none"/></g><g transform="translate(1364.7 143.5)"><path d="M-1.6 -9.2 C6 -8.6 10.6 -1.4 10.4 8.6" stroke="#2f312f" stroke-width="1.3" fill="none" /><path d="M-9.6 8.8 L4.6 -3.6" stroke="#2f312f" stroke-width="2" fill="none" /><path d="M6.4 -5.4 L0.8 -3.4 L4.4 0.6 Z" fill="#2f312f"/><path d="M-9 -8.6 H-1 M-9.6 -5.2 H-3 M-8 -2 H-4" stroke="#2f312f" stroke-width="1.1" fill="none" /></g><g transform="translate(1397 143.5)"><path d="M-6 -9.6 L-10.4 9.6 M5.4 -9.6 L9.6 9.6 M-3.8 -2.2 H3.2 M-3.8 1.4 H3.2" stroke="#2f312f" stroke-width="1.3" fill="none" /></g><g transform="translate(1429.4 143.5)"><circle cx="0" cy="0.4" r="9" stroke="#2f312f" stroke-width="1.3" fill="none"/><path d="M-6.6 5.6 L3.4 -6.2 M-3.6 8.2 L7.4 -3.8 M-8 1.4 L-1 -7.4" stroke="#2f312f" stroke-width="1" fill="none" stroke-dasharray="2.2 1.6"/><text x="-3.4" y="5.4" font-size="14.5" fill="#2f312f" font-family="'Liberation Sans', sans-serif" font-weight="bold">?</text></g><path d="M1444.5 117.3 V124.5 H1437.3 Z" fill="#252725"/><path d="M1346.5 148.5 V155.7 H1339.3 Z" fill="#252725"/><path d="M1444.5 148.5 V155.7 H1437.3 Z" fill="#252725"/><g transform="translate(1462.4 80.5)"><circle cx="-7.6" cy="7.6" r="1.8" stroke="#2f312f" stroke-width="1.2" fill="none"/><circle cx="7.4" cy="-7.6" r="1.8" stroke="#2f312f" stroke-width="1.2" fill="none"/><path d="M-6 6 L-1.6 3.4" stroke="#2f312f" stroke-width="1.2" fill="none" stroke-dasharray="1.6 1.4"/><text x="-3.2" y="3.4" font-size="12" fill="#2f312f" font-family="'Liberation Sans', sans-serif" font-weight="bold">?</text></g><g transform="translate(1494.4 80.5)"><circle cx="-8" cy="-7.6" r="1.6" stroke="#2f312f" stroke-width="1.2" fill="none"/><circle cx="-8" cy="7.6" r="1.6" stroke="#2f312f" stroke-width="1.2" fill="none"/><circle cx="7.4" cy="7.4" r="1.6" stroke="#2f312f" stroke-width="1.2" fill="none"/><circle cx="7.4" cy="2.6" r="1.4" stroke="#2f312f" stroke-width="1.2" fill="none"/><path d="M-8 -5.4 V5.6 M-6 7.6 H5.4 M-7 -2.4 C-1 -1.6 3 2 4 7" stroke="#2f312f" stroke-width="1.1" fill="none" stroke-dasharray="1.5 1.5"/><text x="1.6" y="-1" font-size="12" fill="#2f312f" font-family="'Liberation Sans', sans-serif" font-weight="bold">?</text></g><g transform="translate(1462.4 112.3)"><path d="M-10 -5.6 C-6.6 -2 -6.6 3 -9.8 9.2 M10 -5.6 C6.6 -2 6.6 3 9.8 9.2 M-5.4 6.2 H5.4 M-10.4 9.6 L-7 5 M10.4 9.6 L7 5 M-8.6 -4.6 L-6 -6.4 M8.6 -4.6 L6 -6.4" stroke="#2f312f" stroke-width="1.2" fill="none" /><circle cx="-5.4" cy="6.2" r="1.7" stroke="#2f312f" stroke-width="1.2" fill="#f0f2ef"/><circle cx="5.4" cy="6.2" r="1.7" stroke="#2f312f" stroke-width="1.2" fill="#f0f2ef"/><text x="-3.6" y="1.6" font-size="12.5" fill="#2f312f" font-family="'Liberation Sans', sans-serif" font-weight="bold">?</text></g><g transform="translate(1494.4 112.3)"><path d="M-9.4 -9 H-1.6 V-1 C-1.6 2 0.6 4 4 4 H9.6 V8.8 H-9.4 Z" stroke="#2f312f" stroke-width="1.4" fill="none" /><text x="2.8" y="1.6" font-size="12.5" fill="#2f312f" font-family="'Liberation Sans', sans-serif" font-weight="bold">?</text></g><g transform="translate(1462.4 143.5)"><path d="M-9.6 -8.8 H-1.6 V0 C-1.6 2.6 0.6 4.4 3.4 4.4 H9.2 V9 H-9.6 Z" stroke="#2f312f" stroke-width="1.4" fill="#d9dbd8" /><path d="M-9 -4 L-3 -9 M-9 0.6 L-2 -5.6 M-9 5 L-2 -1 M-8.4 8.8 L0 1.6 M-4 8.8 L2.6 4 M0.6 8.8 L6.6 4.6 M5 8.8 L9 5.4" stroke="#2f312f" stroke-width="0.9" fill="none" /><text x="3" y="1.4" font-size="12.5" fill="#2f312f" font-family="'Liberation Sans', sans-serif" font-weight="bold">?</text></g><g transform="translate(1494.4 143.5)"><path d="M-8 -8.6 V8.4 H8.8 M-10 -5.6 L-8 -9 L-6 -5.6 M5.6 6.4 L9 8.4 L5.6 10.4" stroke="#2f312f" stroke-width="1.2" fill="none" /><circle cx="-1.8" cy="2.2" r="1.8" stroke="#2f312f" stroke-width="1.2" fill="none"/><text x="3" y="1" font-size="12.5" fill="#2f312f" font-family="'Liberation Sans', sans-serif" font-weight="bold">?</text></g><g transform="translate(1527.3 80.5)"><rect x="-9.4" y="-9" width="18.8" height="18" stroke="#2f312f" stroke-width="1.5" fill="none" /><path d="M-5.2 -6 V4 H6.6 M-7.6 -3 L-5.2 -6.6 L-2.8 -3 M3.6 1.6 L7.2 4 L3.6 6.4" stroke="#2f312f" stroke-width="1.5" fill="none" /></g><g transform="translate(1559.8 80.5)"><rect x="-9.4" y="-4.6" width="18.8" height="13.4" stroke="#2f312f" stroke-width="1.4" fill="none" /><rect x="-8.2" y="-9.4" width="8.2" height="2.6" stroke="#2f312f" stroke-width="1.2" fill="none" /><rect x="-6.8" y="-2.2" width="6.4" height="3" stroke="#2f312f" stroke-width="1.2" fill="none" /><rect x="2" y="-2.2" width="5" height="3" stroke="#2f312f" stroke-width="1.2" fill="none" /><rect x="-6.8" y="3.2" width="6.4" height="3" stroke="#2f312f" stroke-width="1.2" fill="none" /><rect x="3" y="5.4" width="6.4" height="3.4" stroke="#2f312f" stroke-width="1.2" fill="none" /><path d="M2 -8.6 C5 -9.4 7 -8.4 8 -6.4 M5.8 -6 L8.4 -5.8 L9.2 -8.4" stroke="#2f312f" stroke-width="1.1" fill="none" /></g><g transform="translate(1527.3 112.3)"><rect x="-9.4" y="-4.6" width="18.8" height="13.4" stroke="#2f312f" stroke-width="1.4" fill="none" /><rect x="-8.2" y="-9.4" width="8.2" height="2.6" stroke="#2f312f" stroke-width="1.2" fill="none" /><rect x="-6.8" y="-1.6" width="7.6" height="4" stroke="#2f312f" stroke-width="1.2" fill="none" /><rect x="3" y="5.4" width="6.4" height="3.4" stroke="#2f312f" stroke-width="1.2" fill="none" /><path d="M2 -8.6 C5 -9.4 7 -8.4 8 -6.4 M5.8 -6 L8.4 -5.8 L9.2 -8.4" stroke="#2f312f" stroke-width="1.1" fill="none" /></g><g transform="translate(1559.8 112.3)"><rect x="-9.2" y="-8.8" width="18.6" height="8" stroke="#2f312f" stroke-width="1.4" fill="none" /><rect x="-4.6" y="-6.6" width="9.4" height="3.6" stroke="#2f312f" stroke-width="1.2" fill="none" /><rect x="-9.2" y="3.6" width="18.6" height="5.6" stroke="#2f312f" stroke-width="1.4" fill="none" /><path d="M-10 1.4 H10" stroke="#2f312f" stroke-width="1.1" fill="none" stroke-dasharray="5 1.2 1.4 1.2"/><path d="M-6.6 6.4 H6.8" stroke="#2f312f" stroke-width="1.4" fill="none" stroke-dasharray="3 2"/></g><g transform="translate(1527.3 143.5)"><rect x="-9" y="-2.4" width="18" height="4.2" stroke="#2f312f" stroke-width="1.4" fill="none" /><rect x="-9" y="4" width="18" height="4.8" stroke="#2f312f" stroke-width="1.4" fill="none" /><path d="M0 -10 V-4 M-2.2 -6.2 L0 -3.8 L2.2 -6.2" stroke="#2f312f" stroke-width="1.2" fill="none" /></g><g transform="translate(1559.8 143.5)"><rect x="3" y="-6.6" width="5.8" height="12" stroke="#2f312f" stroke-width="1.4" fill="none" /><path d="M-9.4 -7 H-3 M-5 -9 L-2.6 -7 L-5 -5 M-0.8 -10 V-4 M-9.4 7.4 H-3 M-5 5.4 L-2.6 7.4 L-5 9.4 M-0.8 4.4 V10.4" stroke="#2f312f" stroke-width="1.2" fill="none" /></g><g transform="translate(1592.6 80.5)"><rect x="0.6" y="-9.4" width="8.4" height="7.6" stroke="#2f312f" stroke-width="1.3" fill="none" /><path d="M-9 0 L-3.6 -8.8 L1.6 0 Z" stroke="#2f312f" stroke-width="1.2" fill="none" /><circle cx="-0.6" cy="3.6" r="5.4" stroke="#2f312f" stroke-width="1.3" fill="none"/></g><g transform="translate(1624.6 80.5)"><path d="M-7.4 -9 H2.4 L9.6 -2.4 V6.8 H-7.4 Z" stroke="#2f312f" stroke-width="1.4" fill="none" /><circle cx="1.4" cy="-0.8" r="4.2" stroke="#2f312f" stroke-width="1.4" fill="none"/><circle cx="-7.2" cy="7" r="1.9" stroke="#2f312f" stroke-width="1.3" fill="#f0f2ef"/></g><g transform="translate(1592.6 112.3)"><rect x="-9.2" y="-8.6" width="18.4" height="17.6" stroke="#2f312f" stroke-width="1.5" fill="none" /><path d="M-8.4 8.4 L-1.8 -1 L1.4 3.4 L3.4 0.8 L8.4 8.4 Z" fill="#2f312f"/><path d="M4.6 -6.6 a2.2 2.2 0 1 0 0.01 0 Z" fill="#2f312f"/></g><g transform="translate(1624.6 112.3)"><path d="M-1.6 -5.6 H-8.8 V8.8 H7 V2" stroke="#2f312f" stroke-width="1.4" fill="none" /><path d="M-1.6 -8.8 H9.6 V1.6 H-1.6 Z" stroke="#2f312f" stroke-width="1.2" fill="none" stroke-dasharray="1.4 1.4"/><path d="M-1.6 -8.8 L7 2" stroke="#2f312f" stroke-width="1.4" fill="none" /></g><g transform="translate(1592.6 143.5)"><path d="M2.8 -8.2 H-9 V8.8 H8.6 V-1.6" stroke="#2f312f" stroke-width="1.5" fill="none" /><path d="M5.4 -10 V-3.6 M3.2 -8 L5.4 -10.4 L7.6 -8 M5.4 -5.6 H10 M8 -7.6 L10.2 -5.6 L8 -3.6" stroke="#2f312f" stroke-width="1.1" fill="none" /><path d="M-6.4 2.4 C-5 7 3 7.6 5.4 2.8 M-7.4 4.6 L-6.4 2 L-4 3.4 M3 2.6 L5.6 2.4 L5.8 5" stroke="#2f312f" stroke-width="1.1" fill="none" /></g><g transform="translate(1624.6 143.5)"><rect x="-3.8" y="-8.8" width="13.4" height="7.8" stroke="#2f312f" stroke-width="1.4" fill="none" /><path d="M-3.8 -8.8 V-1 L-9 9 M-4.6 1 L-0.6 9 M-9 9 L-4.8 5.8 L-0.6 9" stroke="#2f312f" stroke-width="1.2" fill="none" /></g><g transform="translate(1657.3 80.5)"><path d="M-9.2 -1.8 H-2.8 V-9 H9.4 V8.8 H-9.2 Z" stroke="#2f312f" stroke-width="1.4" fill="none" /><path d="M-6.6 0.8 H-0.2 V-6.4 H6.8 V6.2 H-6.6 Z" stroke="#2f312f" stroke-width="1.2" fill="none" /></g><g transform="translate(1689.8 80.5)"><path d="M-10.4 -0.4 H0.6 M9 -0.6 V9" stroke="#2f312f" stroke-width="1.4" fill="none" /><path d="M0.6 -0.4 H9 M9 -10.4 V-0.6" stroke="#2f312f" stroke-width="1.2" fill="none" stroke-dasharray="1.3 1.4"/></g><g transform="translate(1657.3 112.3)"><path d="M3.5 -10.8 a7 7 0 1 0 0.01 0 Z" fill="#2f312f"/><path d="M-9.3 -1 H4 V9.2 H-9.3 Z" stroke="#f0f2ef" stroke-width="1.2" fill="#2f312f" /></g><g transform="translate(1689.8 112.3)"><path d="M-9.4 8.4 V-2 H-4.6 C-6 -9 3 -11 7.4 -6.6 C10.6 -3 9.6 1.6 4.6 3.6 V8.4 Z" stroke="#2f312f" stroke-width="1.4" fill="none" /></g><g transform="translate(1657.3 143.5)"><path d="M-5.6 -1 L3.4 -9.4 C7 -9.6 9.4 -7 9 -3.6 L6.6 -0.6 L5.4 -2 L4 -0.4 L2.8 -2 L1.4 -0.2 L-0.4 -2.6 L-3.4 1.2 Z" fill="#2f312f"/><path d="M-9.6 2.6 H9.4 M-9.6 9.6 H9.4" stroke="#2f312f" stroke-width="1.3" fill="none" stroke-dasharray="2.6 1.4"/><path d="M-9.6 2.6 V9.6 M9.4 2.6 V9.6" stroke="#2f312f" stroke-width="1.3" fill="none" stroke-dasharray="2.4 1.4"/><path d="M-6 6.2 H6 M-4 4.6 L-6.2 6.2 L-4 7.8 M4 4.6 L6.2 6.2 L4 7.8 M0 4.4 V8" stroke="#2f312f" stroke-width="1.1" fill="none" /></g><g transform="translate(1722.6 80.5)"><path d="M-9.8 -9.4 H-3.6 V5.6 H-9.8 Z M3.8 -9.4 H10 V5.6 H3.8 Z" stroke="#2f312f" stroke-width="0.1" fill="#bfc1be" /><path d="M-9.6 -6 L-6 -9.4 M-9.6 -2 L-3.8 -7.6 M-9.6 2 L-3.8 -3.6 M-9.2 5.4 L-3.8 0.4 M-6 5.6 L-3.8 3.6 M4 -6 L7.6 -9.4 M4 -2 L9.8 -7.6 M4 2 L9.8 -3.6 M4.4 5.4 L9.8 0.4 M7.6 5.6 L9.8 3.6 M-3 6.4 L-1.6 8.4 M3.4 6.4 L2 8.4" stroke="#2f312f" stroke-width="1" fill="none" /><path d="M-3.6 -9.4 V5.2 L0.2 8.8 L3.8 5.2 V-9.4" stroke="#2f312f" stroke-width="1.5" fill="none" /></g><g transform="translate(1722.6 112.3)"><circle cx="0" cy="0.4" r="9" stroke="#2f312f" stroke-width="1.3" fill="none"/><path d="M4.4 -2.8 A5.2 5.2 0 1 0 5 2.4" stroke="#2f312f" stroke-width="1.3" fill="none" /><path d="M-2.6 0.4 H2.6 M0 -2.2 V3" stroke="#2f312f" stroke-width="1.3" fill="none" /></g><g transform="translate(1722.6 143.5)"><path d="M-9.6 -1.6 H6.6 M-6.4 -1.6 V3.6 L-1.6 8.8 L3.4 3.6 V-1.6 M-6.4 3.6 H3.4" stroke="#2f312f" stroke-width="1.4" fill="none" /><path d="M-1 -5.4 C-1 -9.6 5 -10 6.4 -7 M4.6 -6 L6.8 -6.4 L7.4 -8.8 M10 -4.6 C8 -2 4 -2.6 3 -4.6 M8.6 -7.2 L10.4 -4.8 L7.6 -4" stroke="#2f312f" stroke-width="1.1" fill="none" /></g><path d="M1736.5 85.5 V92.7 H1729.3 Z" fill="#252725"/><g transform="translate(646 170)"><path d="M-6 -3 H6 L0 3.2 Z" fill="#2a2c2a"/></g><g transform="translate(1097 170)"><path d="M-6 -3 H6 L0 3.2 Z" fill="#2a2c2a"/></g><g transform="translate(1160.7 170)"><path d="M-6 -3 H6 L0 3.2 Z" fill="#2a2c2a"/></g><g transform="translate(1291 170)"><path d="M-6 -3 H6 L0 3.2 Z" fill="#2a2c2a"/></g><g transform="translate(1421.7 170)"><path d="M-6 -3 H6 L0 3.2 Z" fill="#2a2c2a"/></g><g transform="translate(1486 170)"><path d="M-6 -3 H6 L0 3.2 Z" fill="#2a2c2a"/></g><g transform="translate(1551 170)"><path d="M-6 -3 H6 L0 3.2 Z" fill="#2a2c2a"/></g><g transform="translate(1616 170)"><path d="M-6 -3 H6 L0 3.2 Z" fill="#2a2c2a"/></g><g transform="translate(214.8 170)"><rect x="-2.4" y="-6.0" width="1.8" height="1.8" fill="#2f312f"/><rect x="-2.4" y="-2.6" width="1.8" height="1.8" fill="#2f312f"/><rect x="-2.4" y="0.7999999999999998" width="1.8" height="1.8" fill="#2f312f"/><rect x="-2.4" y="4.199999999999999" width="1.8" height="1.8" fill="#2f312f"/><rect x="1.0" y="-6.0" width="1.8" height="1.8" fill="#2f312f"/><rect x="1.0" y="-2.6" width="1.8" height="1.8" fill="#2f312f"/><rect x="1.0" y="0.7999999999999998" width="1.8" height="1.8" fill="#2f312f"/><rect x="1.0" y="4.199999999999999" width="1.8" height="1.8" fill="#2f312f"/></g><g transform="translate(663.5 170)"><rect x="-2.4" y="-6.0" width="1.8" height="1.8" fill="#2f312f"/><rect x="-2.4" y="-2.6" width="1.8" height="1.8" fill="#2f312f"/><rect x="-2.4" y="0.7999999999999998" width="1.8" height="1.8" fill="#2f312f"/><rect x="-2.4" y="4.199999999999999" width="1.8" height="1.8" fill="#2f312f"/><rect x="1.0" y="-6.0" width="1.8" height="1.8" fill="#2f312f"/><rect x="1.0" y="-2.6" width="1.8" height="1.8" fill="#2f312f"/><rect x="1.0" y="0.7999999999999998" width="1.8" height="1.8" fill="#2f312f"/><rect x="1.0" y="4.199999999999999" width="1.8" height="1.8" fill="#2f312f"/></g><g transform="translate(1114 170)"><rect x="-2.4" y="-6.0" width="1.8" height="1.8" fill="#2f312f"/><rect x="-2.4" y="-2.6" width="1.8" height="1.8" fill="#2f312f"/><rect x="-2.4" y="0.7999999999999998" width="1.8" height="1.8" fill="#2f312f"/><rect x="-2.4" y="4.199999999999999" width="1.8" height="1.8" fill="#2f312f"/><rect x="1.0" y="-6.0" width="1.8" height="1.8" fill="#2f312f"/><rect x="1.0" y="-2.6" width="1.8" height="1.8" fill="#2f312f"/><rect x="1.0" y="0.7999999999999998" width="1.8" height="1.8" fill="#2f312f"/><rect x="1.0" y="4.199999999999999" width="1.8" height="1.8" fill="#2f312f"/></g><g transform="translate(1179 170)"><rect x="-2.4" y="-6.0" width="1.8" height="1.8" fill="#2f312f"/><rect x="-2.4" y="-2.6" width="1.8" height="1.8" fill="#2f312f"/><rect x="-2.4" y="0.7999999999999998" width="1.8" height="1.8" fill="#2f312f"/><rect x="-2.4" y="4.199999999999999" width="1.8" height="1.8" fill="#2f312f"/><rect x="1.0" y="-6.0" width="1.8" height="1.8" fill="#2f312f"/><rect x="1.0" y="-2.6" width="1.8" height="1.8" fill="#2f312f"/><rect x="1.0" y="0.7999999999999998" width="1.8" height="1.8" fill="#2f312f"/><rect x="1.0" y="4.199999999999999" width="1.8" height="1.8" fill="#2f312f"/></g><g transform="translate(1309 170)"><rect x="-2.4" y="-6.0" width="1.8" height="1.8" fill="#2f312f"/><rect x="-2.4" y="-2.6" width="1.8" height="1.8" fill="#2f312f"/><rect x="-2.4" y="0.7999999999999998" width="1.8" height="1.8" fill="#2f312f"/><rect x="-2.4" y="4.199999999999999" width="1.8" height="1.8" fill="#2f312f"/><rect x="1.0" y="-6.0" width="1.8" height="1.8" fill="#2f312f"/><rect x="1.0" y="-2.6" width="1.8" height="1.8" fill="#2f312f"/><rect x="1.0" y="0.7999999999999998" width="1.8" height="1.8" fill="#2f312f"/><rect x="1.0" y="4.199999999999999" width="1.8" height="1.8" fill="#2f312f"/></g><g transform="translate(1439 170)"><rect x="-2.4" y="-6.0" width="1.8" height="1.8" fill="#2f312f"/><rect x="-2.4" y="-2.6" width="1.8" height="1.8" fill="#2f312f"/><rect x="-2.4" y="0.7999999999999998" width="1.8" height="1.8" fill="#2f312f"/><rect x="-2.4" y="4.199999999999999" width="1.8" height="1.8" fill="#2f312f"/><rect x="1.0" y="-6.0" width="1.8" height="1.8" fill="#2f312f"/><rect x="1.0" y="-2.6" width="1.8" height="1.8" fill="#2f312f"/><rect x="1.0" y="0.7999999999999998" width="1.8" height="1.8" fill="#2f312f"/><rect x="1.0" y="4.199999999999999" width="1.8" height="1.8" fill="#2f312f"/></g><g transform="translate(1504 170)"><rect x="-2.4" y="-6.0" width="1.8" height="1.8" fill="#2f312f"/><rect x="-2.4" y="-2.6" width="1.8" height="1.8" fill="#2f312f"/><rect x="-2.4" y="0.7999999999999998" width="1.8" height="1.8" fill="#2f312f"/><rect x="-2.4" y="4.199999999999999" width="1.8" height="1.8" fill="#2f312f"/><rect x="1.0" y="-6.0" width="1.8" height="1.8" fill="#2f312f"/><rect x="1.0" y="-2.6" width="1.8" height="1.8" fill="#2f312f"/><rect x="1.0" y="0.7999999999999998" width="1.8" height="1.8" fill="#2f312f"/><rect x="1.0" y="4.199999999999999" width="1.8" height="1.8" fill="#2f312f"/></g><g transform="translate(1569 170)"><rect x="-2.4" y="-6.0" width="1.8" height="1.8" fill="#2f312f"/><rect x="-2.4" y="-2.6" width="1.8" height="1.8" fill="#2f312f"/><rect x="-2.4" y="0.7999999999999998" width="1.8" height="1.8" fill="#2f312f"/><rect x="-2.4" y="4.199999999999999" width="1.8" height="1.8" fill="#2f312f"/><rect x="1.0" y="-6.0" width="1.8" height="1.8" fill="#2f312f"/><rect x="1.0" y="-2.6" width="1.8" height="1.8" fill="#2f312f"/><rect x="1.0" y="0.7999999999999998" width="1.8" height="1.8" fill="#2f312f"/><rect x="1.0" y="4.199999999999999" width="1.8" height="1.8" fill="#2f312f"/></g><g transform="translate(1634 170)"><rect x="-2.4" y="-6.0" width="1.8" height="1.8" fill="#2f312f"/><rect x="-2.4" y="-2.6" width="1.8" height="1.8" fill="#2f312f"/><rect x="-2.4" y="0.7999999999999998" width="1.8" height="1.8" fill="#2f312f"/><rect x="-2.4" y="4.199999999999999" width="1.8" height="1.8" fill="#2f312f"/><rect x="1.0" y="-6.0" width="1.8" height="1.8" fill="#2f312f"/><rect x="1.0" y="-2.6" width="1.8" height="1.8" fill="#2f312f"/><rect x="1.0" y="0.7999999999999998" width="1.8" height="1.8" fill="#2f312f"/><rect x="1.0" y="4.199999999999999" width="1.8" height="1.8" fill="#2f312f"/></g><g transform="translate(1699.5 170)"><rect x="-2.4" y="-6.0" width="1.8" height="1.8" fill="#2f312f"/><rect x="-2.4" y="-2.6" width="1.8" height="1.8" fill="#2f312f"/><rect x="-2.4" y="0.7999999999999998" width="1.8" height="1.8" fill="#2f312f"/><rect x="-2.4" y="4.199999999999999" width="1.8" height="1.8" fill="#2f312f"/><rect x="1.0" y="-6.0" width="1.8" height="1.8" fill="#2f312f"/><rect x="1.0" y="-2.6" width="1.8" height="1.8" fill="#2f312f"/><rect x="1.0" y="0.7999999999999998" width="1.8" height="1.8" fill="#2f312f"/><rect x="1.0" y="4.199999999999999" width="1.8" height="1.8" fill="#2f312f"/></g><g transform="translate(1731 170)"><rect x="-2.4" y="-6.0" width="1.8" height="1.8" fill="#2f312f"/><rect x="-2.4" y="-2.6" width="1.8" height="1.8" fill="#2f312f"/><rect x="-2.4" y="0.7999999999999998" width="1.8" height="1.8" fill="#2f312f"/><rect x="-2.4" y="4.199999999999999" width="1.8" height="1.8" fill="#2f312f"/><rect x="1.0" y="-6.0" width="1.8" height="1.8" fill="#2f312f"/><rect x="1.0" y="-2.6" width="1.8" height="1.8" fill="#2f312f"/><rect x="1.0" y="0.7999999999999998" width="1.8" height="1.8" fill="#2f312f"/><rect x="1.0" y="4.199999999999999" width="1.8" height="1.8" fill="#2f312f"/></g></svg><svg class="b" style="left:0;top:180px;z-index:4" width="377" height="90" viewBox="0 180 377 90"><g transform="translate(365.2 190.6)"><path d="M-2.2 -4.6 L-1.1 -7.4 H1.1 L2.2 -4.6 Z" fill="#2a2c2a" transform="rotate(0)"/><path d="M-2.2 -4.6 L-1.1 -7.4 H1.1 L2.2 -4.6 Z" fill="#2a2c2a" transform="rotate(45)"/><path d="M-2.2 -4.6 L-1.1 -7.4 H1.1 L2.2 -4.6 Z" fill="#2a2c2a" transform="rotate(90)"/><path d="M-2.2 -4.6 L-1.1 -7.4 H1.1 L2.2 -4.6 Z" fill="#2a2c2a" transform="rotate(135)"/><path d="M-2.2 -4.6 L-1.1 -7.4 H1.1 L2.2 -4.6 Z" fill="#2a2c2a" transform="rotate(180)"/><path d="M-2.2 -4.6 L-1.1 -7.4 H1.1 L2.2 -4.6 Z" fill="#2a2c2a" transform="rotate(225)"/><path d="M-2.2 -4.6 L-1.1 -7.4 H1.1 L2.2 -4.6 Z" fill="#2a2c2a" transform="rotate(270)"/><path d="M-2.2 -4.6 L-1.1 -7.4 H1.1 L2.2 -4.6 Z" fill="#2a2c2a" transform="rotate(315)"/><circle cx="0" cy="0" r="4.3" stroke="#2a2c2a" stroke-width="2.2" fill="none"/></g><g transform="translate(329 217.5)"><path d="M-6 -3 H6 L0 3.2 Z" fill="#2a2c2a"/></g><g transform="translate(359.5 219)"><path d="M-10 0 H10 M0 -10 V10" stroke="#2a2c2a" stroke-width="2.6" fill="none" /></g><g transform="translate(17.5 250)"><circle cx="2.8" cy="-1.1" r="4.3" stroke="#a9aba8" stroke-width="1.6" fill="none"/><path d="M-0.6 2.2 L-6.2 6.4" stroke="#a9aba8" stroke-width="2.4" fill="none" /></g></svg><svg class="b" style="left:0;top:265px;z-index:2" width="374" height="559" viewBox="0 265 374 559"><g transform="translate(57.5 266.5)"><text x="0" y="9.2" font-size="29" font-weight="bold" text-anchor="middle" fill="#3a3c3a" font-family="'Liberation Serif', serif">T</text></g><g transform="translate(57.5 299.5)"><text x="0" y="9.2" font-size="29" font-weight="bold" text-anchor="middle" fill="#3a3c3a" font-family="'Liberation Serif', serif">T</text></g><g transform="translate(57.5 332.5)"><text x="0" y="9.2" font-size="29" font-weight="bold" text-anchor="middle" fill="#3a3c3a" font-family="'Liberation Serif', serif">T</text></g><g transform="translate(57.5 365.5)"><text x="0" y="9.2" font-size="29" font-weight="bold" text-anchor="middle" fill="#3a3c3a" font-family="'Liberation Serif', serif">T</text></g><g transform="translate(57.5 398.5)"><text x="0" y="9.2" font-size="29" font-weight="bold" text-anchor="middle" fill="#3a3c3a" font-family="'Liberation Serif', serif">T</text></g><g transform="translate(57.5 431.5)"><text x="0" y="9.2" font-size="29" font-weight="bold" text-anchor="middle" fill="#3a3c3a" font-family="'Liberation Serif', serif">T</text></g><g transform="translate(57.5 464.5)"><text x="0" y="9.2" font-size="29" font-weight="bold" text-anchor="middle" fill="#3a3c3a" font-family="'Liberation Serif', serif">T</text></g><g transform="translate(57.5 497.5)"><text x="0" y="9.2" font-size="29" font-weight="bold" text-anchor="middle" fill="#3a3c3a" font-family="'Liberation Serif', serif">T</text></g><g transform="translate(57.5 530.5)"><text x="0" y="9.2" font-size="29" font-weight="bold" text-anchor="middle" fill="#3a3c3a" font-family="'Liberation Serif', serif">T</text></g><g transform="translate(57.5 563.5)"><text x="0" y="9.2" font-size="29" font-weight="bold" text-anchor="middle" fill="#3a3c3a" font-family="'Liberation Serif', serif">T</text></g><g transform="translate(57.5 596.5)"><text x="0" y="9.2" font-size="29" font-weight="bold" text-anchor="middle" fill="#3a3c3a" font-family="'Liberation Serif', serif">T</text></g><g transform="translate(57.5 629.5)"><text x="0" y="9.2" font-size="29" font-weight="bold" text-anchor="middle" fill="#3a3c3a" font-family="'Liberation Serif', serif">T</text></g><g transform="translate(57.5 662.5)"><text x="0" y="9.2" font-size="29" font-weight="bold" text-anchor="middle" fill="#3a3c3a" font-family="'Liberation Serif', serif">T</text></g><g transform="translate(57.5 695.5)"><text x="0" y="9.2" font-size="29" font-weight="bold" text-anchor="middle" fill="#3a3c3a" font-family="'Liberation Serif', serif">T</text></g><g transform="translate(57.5 728.5)"><text x="0" y="9.2" font-size="29" font-weight="bold" text-anchor="middle" fill="#3a3c3a" font-family="'Liberation Serif', serif">T</text></g><g transform="translate(57.5 761.5)"><text x="0" y="9.2" font-size="29" font-weight="bold" text-anchor="middle" fill="#3a3c3a" font-family="'Liberation Serif', serif">T</text></g><g transform="translate(57.5 794.5)"><text x="0" y="9.2" font-size="29" font-weight="bold" text-anchor="middle" fill="#3a3c3a" font-family="'Liberation Serif', serif">T</text></g><g transform="translate(57.5 827.5)"><text x="0" y="9.2" font-size="29" font-weight="bold" text-anchor="middle" fill="#3a3c3a" font-family="'Liberation Serif', serif">T</text></g></svg><svg class="b" style="left:720px;top:180px;z-index:8" width="860" height="38" viewBox="720 180 860 38"><g transform="translate(733.8 186.2)"><rect x="-6.9" y="-2.1" width="1.7" height="1.7" fill="#2f312f"/><rect x="-6.9" y="1.7999999999999998" width="1.7" height="1.7" fill="#2f312f"/><rect x="-2.7" y="-2.1" width="1.7" height="1.7" fill="#2f312f"/><rect x="-2.7" y="1.7999999999999998" width="1.7" height="1.7" fill="#2f312f"/><rect x="1.5" y="-2.1" width="1.7" height="1.7" fill="#2f312f"/><rect x="1.5" y="1.7999999999999998" width="1.7" height="1.7" fill="#2f312f"/><rect x="5.700000000000001" y="-2.1" width="1.7" height="1.7" fill="#2f312f"/><rect x="5.700000000000001" y="1.7999999999999998" width="1.7" height="1.7" fill="#2f312f"/></g><g transform="translate(733.9 206.6)"><path d="M-2.3 -4.8 L-1.2 -7.3 H1.2 L2.3 -4.8 Z" fill="#2f312f" transform="rotate(0)"/><path d="M-2.3 -4.8 L-1.2 -7.3 H1.2 L2.3 -4.8 Z" fill="#2f312f" transform="rotate(45)"/><path d="M-2.3 -4.8 L-1.2 -7.3 H1.2 L2.3 -4.8 Z" fill="#2f312f" transform="rotate(90)"/><path d="M-2.3 -4.8 L-1.2 -7.3 H1.2 L2.3 -4.8 Z" fill="#2f312f" transform="rotate(135)"/><path d="M-2.3 -4.8 L-1.2 -7.3 H1.2 L2.3 -4.8 Z" fill="#2f312f" transform="rotate(180)"/><path d="M-2.3 -4.8 L-1.2 -7.3 H1.2 L2.3 -4.8 Z" fill="#2f312f" transform="rotate(225)"/><path d="M-2.3 -4.8 L-1.2 -7.3 H1.2 L2.3 -4.8 Z" fill="#2f312f" transform="rotate(270)"/><path d="M-2.3 -4.8 L-1.2 -7.3 H1.2 L2.3 -4.8 Z" fill="#2f312f" transform="rotate(315)"/><circle cx="0" cy="0" r="4.5" stroke="#2f312f" stroke-width="2.2" fill="none"/></g><g transform="translate(759.6 198.4)"><path d="M-8.6 0.6 L1.4 -7.6 C6.4 -10.4 12 -4.6 8.2 0.2 L-0.6 9.6 L-3.4 7 L5 -1.8 C6.4 -3.6 4.6 -5.4 2.8 -4.2 L-6 3.6 Z" stroke="#ffffff" stroke-width="1" fill="#ffffff" /><path d="M-8.6 0.6 L-8.2 3.4 L-5.6 6 L-6 3.6 M-0.6 9.6 L-1 11.4 L-3.8 9 L-3.4 7" stroke="#d4d6d3" stroke-width="1" fill="#d4d6d3" /><path d="M-0.8 11.2 L8 1.8 C10.4 -1 10.2 -3.6 9.4 -5.2" stroke="#cfd1ce" stroke-width="1.2" fill="none" /></g><g transform="translate(787.9 196.8)"><path d="M-6.2 -3 H6.2 L0 3.4 Z" fill="#ffffff"/></g><g transform="translate(820 198.5)"><path d="M-10.4 -1.9 L-0.5 -10.8 M-8 0.8 L2.5 -8.1 M4 -1.2 V8 M-2 8 H10" stroke="#2f312f" stroke-width="1.4" fill="none" /></g><g transform="translate(854 200)"><path d="M-10.7 1.8 L-2.3 -5.7 M-8.3 4.5 L-0.8 -2.2 M1.6 -0.7 V5.2 M-2.8 5.5 H6" stroke="#2f312f" stroke-width="1.3" fill="none" /></g><g transform="translate(856.3 191.9)"><path d="M-7.2 0 C-3.6 -5.4 3.6 -5.4 7.2 0 C3.6 4.6 -3.6 4.6 -7.2 0 Z" fill="#2f312f"/><path d="M0 -3 a3 3 0 1 0 0.01 0 Z" fill="#f0f2ef"/><path d="M0 -1.5 a1.5 1.5 0 1 0 0.01 0 Z" fill="#2f312f"/></g><g transform="translate(889 200)"><path d="M-7.4 -1.7 V5.7 H0.8 M-9.4 1 L-7.4 -2 L-5.4 1 M-1.6 3.8 L1.2 5.7 L-1.6 7.6" stroke="#2f312f" stroke-width="1.3" fill="none" /></g><g transform="translate(890.4 191.9)"><path d="M-7.2 0 C-3.6 -5.4 3.6 -5.4 7.2 0 C3.6 4.6 -3.6 4.6 -7.2 0 Z" fill="#2f312f"/><path d="M0 -3 a3 3 0 1 0 0.01 0 Z" fill="#f0f2ef"/><path d="M0 -1.5 a1.5 1.5 0 1 0 0.01 0 Z" fill="#2f312f"/></g><g transform="translate(922.7 198.3)"><path d="M-4 -8.8 V8.8 M4 -8.8 V8.8 M-8.8 -3.6 H8.8 M-8.8 4.2 H8.8" stroke="#2f312f" stroke-width="1.4" fill="none" /></g><g transform="translate(954 198)"><path d="M-5.6 -8.6 V6.4 M-3.4 6.6 H10 M-8 -5 L-5.6 -9 L-3.2 -5 M6.4 4.2 L10.4 6.6 L6.4 9" stroke="#2f312f" stroke-width="1.3" fill="none" /><circle cx="-5.6" cy="6.6" r="2.1" stroke="#2f312f" stroke-width="1.3" fill="#fbfbfa"/></g><g transform="translate(1030.4 197)"><path d="M-6 -3 H6 L0 3.2 Z" fill="#2a2c2a"/></g><g transform="translate(1060.4 198.4)"><path d="M-9 9 H-0.4 V-8.4 H8.4" stroke="#2f312f" stroke-width="1.4" fill="none" /></g><g transform="translate(1095.4 198)"><path d="M-5.6 4 L6.2 -3.4" stroke="#ffffff" stroke-width="1.3" fill="none" /><circle cx="-7.4" cy="5.2" r="1.9" stroke="#ffffff" stroke-width="1.2" fill="none"/><circle cx="8" cy="-4.6" r="1.9" stroke="#ffffff" stroke-width="1.2" fill="none"/><path d="M-7.4 -8 L-5 -5.6 L-7.4 -3.2 L-9.8 -5.6 Z M6.4 3.6 L8.8 6 L6.4 8.4 L4 6 Z" stroke="#ffffff" stroke-width="1.2" fill="none" /></g><g transform="translate(1126 198.6)"><path d="M-7.6 -6 V8.8 M6.6 -6 V8.8 M-7.6 6.6 H5.6 M3 4.6 L6 6.6 L3 8.6 M-7.6 -10 V-5 M-10 -7.6 H-5.2 M6.6 -10 V-5 M4.2 -7.6 H9" stroke="#2f312f" stroke-width="1.2" fill="none" /></g><g transform="translate(1189.5 197)"><path d="M-6 -3 H6 L0 3.2 Z" fill="#2a2c2a"/></g><g transform="translate(1220 198)"><circle cx="-2" cy="-1.6" r="6.2" stroke="#2f312f" stroke-width="1.3" fill="none"/><path d="M2.6 3 L8 8.4" stroke="#2f312f" stroke-width="2" fill="none" /><path d="M-5 -5.4 H7.6 V3 M-5 -2.6 H7.6 M-5 0.4 H5" stroke="#2f312f" stroke-width="1" fill="none" stroke-dasharray="1.3 1.3"/></g><g transform="translate(1248.8 197)"><path d="M-6 -3 H6 L0 3.2 Z" fill="#2a2c2a"/></g><g transform="translate(1275.5 198)"><circle cx="-2.4" cy="-2" r="6" stroke="#2f312f" stroke-width="1.4" fill="none"/><path d="M2 2.6 L8.2 8.8" stroke="#2f312f" stroke-width="2.2" fill="none" /><path d="M-5.4 -2.8 H0.6 M-2.4 -5.6 V0 M-5 1.4 H0.2" stroke="#2f312f" stroke-width="1.2" fill="none" /></g><g transform="translate(1339.5 197)"><path d="M-6 -3 H6 L0 3.2 Z" fill="#2a2c2a"/></g><g transform="translate(1516 198.4)"><path d="M-7.4 -9 H9.4 M-7.4 -9 V-6.6 M-7.4 -4 V0.8 M9.4 -9 V-6" stroke="#2f312f" stroke-width="1.3" fill="none" /><path d="M-5 -9.6 H9.6 V-6.6 H-5 Z" fill="#555755"/><path d="M2.6 -6.6 V9 M7.6 -6.6 V9 M2.6 -3 L7.6 1 M7.6 -3 L2.6 1 M2.6 1 L7.6 5.6 M7.6 1 L2.6 5.6 M2.6 5.6 L7.6 9 M7.6 5.6 L2.6 9" stroke="#2f312f" stroke-width="1.1" fill="none" /><path d="M-7.4 -6.6 V0.6 M-8.8 -1 L-7.4 1 L-6 -1" stroke="#2f312f" stroke-width="1.1" fill="none" /><rect x="-9.6" y="2.6" width="9" height="6.2" stroke="#2f312f" stroke-width="1.2" fill="none" /><path d="M-9.6 5.6 H-0.6 M-5 2.6 V8.8" stroke="#2f312f" stroke-width="1.1" fill="none" /></g><g transform="translate(1551 198)"><path d="M-8.6 9 L-7.4 4.6 L1.4 -4.2 L4.4 -1.2 L-4.4 7.6 Z" stroke="#2f312f" stroke-width="1.3" fill="none" /><path d="M1.4 -7 L7.2 -1.2 L5.8 0.2 L0 -5.6 Z" fill="#2f312f"/><path d="M3.6 -5 L6.4 -9 C8 -10.6 11 -8 9.4 -6 L5.6 -3 Z" fill="#2f312f"/></g></svg>
<span class="t" style="left:41px;top:10.0px;font-size:15px;line-height:18px;color:#3a3c3a;letter-spacing:-0.348px;">Файл</span>
<span class="t" style="left:92.5px;top:10.0px;font-size:15px;line-height:18px;color:#3a3c3a;letter-spacing:-0.112px;">Правка</span>
<span class="t" style="left:158.5px;top:10.0px;font-size:15px;line-height:18px;color:#3a3c3a;letter-spacing:-0.400px;">Выделить</span>
<span class="t" style="left:240.5px;top:10.0px;font-size:15px;line-height:18px;color:#3a3c3a;letter-spacing:-0.547px;">Вид</span>
<span class="t" style="left:282px;top:10.0px;font-size:15px;line-height:18px;color:#3a3c3a;letter-spacing:-0.609px;">Вставка</span>
<span class="t" style="left:349.5px;top:10.0px;font-size:15px;line-height:18px;color:#3a3c3a;letter-spacing:0.061px;">Черчение</span>
<span class="t" style="left:433px;top:10.0px;font-size:15px;line-height:18px;color:#3a3c3a;letter-spacing:0.188px;">Ограничения</span>
<span class="t" style="left:542px;top:10.0px;font-size:15px;line-height:18px;color:#3a3c3a;letter-spacing:-0.111px;">Оформление</span>
<span class="t" style="left:649px;top:10.0px;font-size:15px;line-height:18px;color:#3a3c3a;letter-spacing:0.094px;">Диагностика</span>
<span class="t" style="left:752.5px;top:10.0px;font-size:15px;line-height:18px;color:#3a3c3a;letter-spacing:0.111px;">Управление</span>
<span class="t" style="left:852.5px;top:10.0px;font-size:15px;line-height:18px;color:#3a3c3a;letter-spacing:-0.038px;">Настройка</span>
<span class="t" style="left:941.5px;top:10.0px;font-size:15px;line-height:18px;color:#3a3c3a;letter-spacing:0.173px;">Приложения</span>
<span class="t" style="left:1047px;top:10.0px;font-size:15px;line-height:18px;color:#3a3c3a;letter-spacing:0.160px;">Окно</span>
<span class="t" style="left:1098px;top:10.0px;font-size:15px;line-height:18px;color:#3a3c3a;letter-spacing:-0.263px;">Справка</span>
<span class="t" style="left:1576.5px;top:8.8px;font-size:15px;line-height:18px;color:#a3a5a2;letter-spacing:0.305px;">Поиск по командам (Alt+/)</span>
<span class="t" style="left:58.5px;top:41.0px;font-size:14px;line-height:17px;color:#3a3c3a;letter-spacing:-0.317px;">Деталь с внутренней...</span>
<span class="t" style="left:269px;top:41.0px;font-size:14px;line-height:17px;color:#3a3c3a;letter-spacing:-0.228px;">Деталь с наружной ре...</span>
<span class="t" style="left:480px;top:41.0px;font-size:14px;line-height:17px;color:#ffffff;letter-spacing:-0.317px;">Деталь с внутренней...</span>
<span class="t" style="left:691px;top:41.0px;font-size:14px;line-height:17px;color:#3a3c3a;letter-spacing:-0.228px;">Деталь с наружной ре...</span>
<span class="t" style="left:33px;top:71.0px;font-size:15px;line-height:18px;color:#ffffff;letter-spacing:0.186px;">Черчение</span>
<span class="t" style="left:33px;top:103.0px;font-size:15px;line-height:18px;color:#3a3c3a;letter-spacing:0.161px;">Управление</span>
<span class="t" style="left:33px;top:134.0px;font-size:15px;line-height:18px;color:#3a3c3a;letter-spacing:-0.902px;">СПДС</span>
<span class="t" style="left:254px;top:71.0px;font-size:15px;line-height:18px;color:#3a3c3a;letter-spacing:0.080px;">Автолиния</span>
<span class="t" style="left:254px;top:103.0px;font-size:15px;line-height:18px;color:#3a3c3a;letter-spacing:0.383px;">Прямоугольник</span>
<span class="t" style="left:254px;top:134.0px;font-size:15px;line-height:18px;color:#3a3c3a;letter-spacing:0.212px;">Отрезок</span>
<span class="t" style="left:403px;top:71.0px;font-size:15px;line-height:18px;color:#3a3c3a;letter-spacing:0.108px;">Окружность</span>
<span class="t" style="left:403px;top:103.0px;font-size:15px;line-height:18px;color:#3a3c3a;letter-spacing:-0.121px;">Дуга</span>
<span class="t" style="left:403px;top:127.0px;font-size:15px;line-height:18px;color:#3a3c3a;letter-spacing:-0.027px;">Вспомогатель...</span>
<span class="t" style="left:403px;top:141.0px;font-size:15px;line-height:18px;color:#3a3c3a;letter-spacing:0.133px;">прямая</span>
<span class="t" style="left:553px;top:71.0px;font-size:15px;line-height:18px;color:#3a3c3a;letter-spacing:-0.297px;">Фаска</span>
<span class="t" style="left:553px;top:103.0px;font-size:15px;line-height:18px;color:#3a3c3a;letter-spacing:-0.031px;">Скругление</span>
<span class="t" style="left:553px;top:134.0px;font-size:15px;line-height:18px;color:#3a3c3a;letter-spacing:0.087px;">Штриховка</span>
<span class="t" style="left:704px;top:71.0px;font-size:15px;line-height:18px;color:#3a3c3a;letter-spacing:0.221px;">Усечь кривую</span>
<span class="t" style="left:704px;top:96.0px;font-size:15px;line-height:18px;color:#3a3c3a;letter-spacing:0.033px;">Переместить по</span>
<span class="t" style="left:704px;top:109.0px;font-size:15px;line-height:18px;color:#3a3c3a;letter-spacing:0.254px;">координатам</span>
<span class="t" style="left:704px;top:127.0px;font-size:15px;line-height:18px;color:#3a3c3a;letter-spacing:0.456px;">Копия</span>
<span class="t" style="left:704px;top:141.0px;font-size:15px;line-height:18px;color:#3a3c3a;letter-spacing:-0.012px;">указанием</span>
<span class="t" style="left:853px;top:64.0px;font-size:15px;line-height:18px;color:#3a3c3a;letter-spacing:0.013px;">Удлинить до</span>
<span class="t" style="left:853px;top:78.0px;font-size:15px;line-height:18px;color:#3a3c3a;letter-spacing:0.087px;">ближайшего о...</span>
<span class="t" style="left:853px;top:103.0px;font-size:15px;line-height:18px;color:#3a3c3a;letter-spacing:0.102px;">Повернуть</span>
<span class="t" style="left:853px;top:134.0px;font-size:15px;line-height:18px;color:#3a3c3a;letter-spacing:-0.051px;">Масштабиров...</span>
<span class="t" style="left:1003px;top:71.0px;font-size:15px;line-height:18px;color:#3a3c3a;letter-spacing:0.079px;">Разбить кривую</span>
<span class="t" style="left:1003px;top:96.0px;font-size:15px;line-height:18px;color:#3a3c3a;letter-spacing:-0.021px;">Зеркально</span>
<span class="t" style="left:1003px;top:109.0px;font-size:15px;line-height:18px;color:#3a3c3a;letter-spacing:0.082px;">отразить</span>
<span class="t" style="left:1003px;top:127.0px;font-size:15px;line-height:18px;color:#3a3c3a;letter-spacing:-0.028px;">Деформация</span>
<span class="t" style="left:1003px;top:141.0px;font-size:15px;line-height:18px;color:#3a3c3a;letter-spacing:0.197px;">перемещением</span>
<span class="t" style="left:135px;top:162.8px;font-size:13.5px;line-height:16px;color:#3a3c3a;letter-spacing:-0.682px;">Системная</span>
<span class="t" style="left:399px;top:162.8px;font-size:13.5px;line-height:16px;color:#3a3c3a;letter-spacing:-0.257px;">Геометрия</span>
<span class="t" style="left:859px;top:162.8px;font-size:13.5px;line-height:16px;color:#3a3c3a;letter-spacing:-0.268px;">Правка</span>
<span class="t" style="left:1127px;top:162.8px;font-size:13.5px;line-height:16px;color:#3a3c3a;letter-spacing:-1.066px;">Ра...</span>
<span class="t" style="left:1196px;top:162.8px;font-size:13.5px;line-height:16px;color:#3a3c3a;letter-spacing:-0.300px;">Обозначения</span>
<span class="t" style="left:1327px;top:162.8px;font-size:13.5px;line-height:16px;color:#3a3c3a;letter-spacing:-0.391px;">Ограничения</span>
<span class="t" style="left:1451px;top:162.8px;font-size:13.5px;line-height:16px;color:#3a3c3a;letter-spacing:-0.787px;">Ди...</span>
<span class="t" style="left:1517px;top:162.8px;font-size:13.5px;line-height:16px;color:#3a3c3a;letter-spacing:-0.963px;">Ви...</span>
<span class="t" style="left:1582px;top:162.8px;font-size:13.5px;line-height:16px;color:#3a3c3a;letter-spacing:-1.003px;">Вс...</span>
<span class="t" style="left:1646px;top:162.8px;font-size:13.5px;line-height:16px;color:#3a3c3a;letter-spacing:-0.301px;">Инстр..</span>
<span class="t" style="left:1707.5px;top:162.8px;font-size:13.5px;line-height:16px;color:#3a3c3a;letter-spacing:-1.133px;">О.</span>
<span class="t" style="left:5.5px;top:182.5px;font-size:14px;line-height:17px;color:#3a3c3a;letter-spacing:-0.293px;">Параметры</span>
<span class="t" style="left:123px;top:182.5px;font-size:14px;line-height:17px;color:#3a3c3a;letter-spacing:-0.171px;">Дерево чертежа</span>
<span class="t" style="left:241px;top:182.5px;font-size:14px;line-height:17px;color:#3a3c3a;letter-spacing:-0.086px;">Библиотеки</span>
<span class="t" style="left:7px;top:211.5px;font-size:15px;line-height:18px;color:#3a3c3a;letter-spacing:-0.039px;">Типовые тексты</span>
<span class="t" style="left:73px;top:258.5px;font-size:15px;line-height:18px;color:#3a3c3a;max-width:301px;overflow:hidden;">Качество и толщину покрытия не контролировать</span>
<span class="t" style="left:73px;top:291.5px;font-size:15px;line-height:18px;color:#3a3c3a;letter-spacing:-0.041px;max-width:301px;overflow:hidden;">Клеймить на пломбе упаковки ....</span>
<span class="t" style="left:73px;top:324.5px;font-size:15px;line-height:18px;color:#3a3c3a;letter-spacing:-0.042px;max-width:301px;overflow:hidden;">Маркировать и клеймить по ....</span>
<span class="t" style="left:73px;top:357.5px;font-size:15px;line-height:18px;color:#3a3c3a;max-width:301px;overflow:hidden;">Массу обеспечить удалением слоя материала</span>
<span class="t" style="left:73px;top:390.5px;font-size:15px;line-height:18px;color:#3a3c3a;letter-spacing:-0.018px;max-width:301px;overflow:hidden;">Материал-заменитель.</span>
<span class="t" style="left:73px;top:423.5px;font-size:15px;line-height:18px;color:#3a3c3a;letter-spacing:0.085px;max-width:301px;overflow:hidden;">Места вырезки образцов.</span>
<span class="t" style="left:73px;top:456.5px;font-size:15px;line-height:18px;color:#3a3c3a;letter-spacing:-0.469px;max-width:301px;overflow:hidden;">Надписи ..., шрифт ....</span>
<span class="t" style="left:73px;top:489.5px;font-size:15px;line-height:18px;color:#3a3c3a;letter-spacing:-0.354px;max-width:301px;overflow:hidden;">Надписи нанести ..., шрифт ....</span>
<span class="t" style="left:73px;top:522.5px;font-size:15px;line-height:18px;color:#3a3c3a;letter-spacing:0.113px;max-width:301px;overflow:hidden;">Направления рентгенографирования.</span>
<span class="t" style="left:73px;top:555.5px;font-size:15px;line-height:18px;color:#3a3c3a;letter-spacing:-0.019px;max-width:301px;overflow:hidden;">Неуказанные предельные отклонения...</span>
<span class="t" style="left:73px;top:588.5px;font-size:15px;line-height:18px;color:#3a3c3a;letter-spacing:0.024px;max-width:301px;overflow:hidden;">Неуказанные размеры радиусов.</span>
<span class="t" style="left:73px;top:621.5px;font-size:15px;line-height:18px;color:#3a3c3a;letter-spacing:0.001px;max-width:301px;overflow:hidden;">Общие допуски</span>
<span class="t" style="left:73px;top:654.5px;font-size:15px;line-height:18px;color:#3a3c3a;letter-spacing:-0.102px;max-width:301px;overflow:hidden;">Остальные технические требования по ....</span>
<span class="t" style="left:73px;top:687.5px;font-size:15px;line-height:18px;color:#3a3c3a;max-width:301px;overflow:hidden;">Отклонение контура детали от контура шаблона</span>
<span class="t" style="left:73px;top:720.5px;font-size:15px;line-height:18px;color:#3a3c3a;letter-spacing:-0.163px;max-width:301px;overflow:hidden;">Отслоение не допускается.</span>
<span class="t" style="left:73px;top:753.5px;font-size:15px;line-height:18px;color:#3a3c3a;max-width:301px;overflow:hidden;">Поверхность зачистить с шероховатостью ...</span>
<span class="t" style="left:73px;top:786.5px;font-size:15px;line-height:18px;color:#3a3c3a;letter-spacing:0.139px;max-width:301px;overflow:hidden;">Предельные отклонения координат.</span>
<span class="t" style="left:968px;top:190.0px;font-size:14px;line-height:17px;color:#3a3c3a;letter-spacing:0.012px;z-index:7;">СК 0</span>
<span class="t" style="left:1144px;top:190.0px;font-size:14px;line-height:17px;color:#3a3c3a;z-index:7;">1</span>
<span class="t" style="left:1293.5px;top:190.0px;font-size:14px;line-height:17px;color:#3a3c3a;z-index:7;width:29.5px;overflow:hidden;">0.565</span>
<span class="t" style="left:1358px;top:190.0px;font-size:14px;line-height:17px;color:#3a3c3a;z-index:7;">X</span>
<span class="t" style="left:1378.5px;top:190.0px;font-size:14px;line-height:17px;color:#3a3c3a;z-index:7;width:44.5px;overflow:hidden;">-60.632</span>
<span class="t" style="left:1430.5px;top:190.0px;font-size:14px;line-height:17px;color:#3a3c3a;z-index:7;">Y</span>
<span class="t" style="left:1450px;top:190.0px;font-size:14px;line-height:17px;color:#3a3c3a;letter-spacing:0.036px;z-index:7;">35.115</span>
<svg class="b" style="left:0;top:0;z-index:1" width="1920" height="1034" viewBox="0 0 1920 1034" font-family="'Liberation Sans', sans-serif">
<defs><clipPath id="cdet"><circle cx="1184.8" cy="744.3" r="66.7"/></clipPath><clipPath id="ccanvas"><rect x="377" y="180" width="1542" height="849"/></clipPath></defs>
<g clip-path="url(#ccanvas)">
<rect x="761.5" y="228.5" width="560.0" height="793.0" stroke="#151515" stroke-width="1" fill="#fdfdfb" shape-rendering="crispEdges"/>
<rect x="813.0" y="241" width="496.0" height="2" fill="#0a78ff"/>
<rect x="813.0" y="1007" width="496.0" height="2" fill="#0a78ff"/>
<rect x="813" y="241.7" width="2" height="766.3" fill="#0a78ff"/>
<rect x="1307" y="241.7" width="2" height="766.3" fill="#0a78ff"/>
<rect x="814.0" y="278" width="186.9" height="2" fill="#0a78ff"/>
<rect x="1000" y="241.7" width="2" height="38.4" fill="#0a78ff"/>
<rect x="781" y="240.7" width="2" height="322.4" fill="#0a78ff"/>
<rect x="795" y="241.7" width="2" height="320.4" fill="#0a78ff"/>
<rect x="782.0" y="241" width="32.0" height="2" fill="#0a78ff"/>
<rect x="782.0" y="561" width="32.0" height="2" fill="#0a78ff"/>
<rect x="782.0" y="401" width="32.0" height="2" fill="#0a78ff"/>
<rect x="781" y="619.9" width="2" height="389.1" fill="#0a78ff"/>
<rect x="795" y="620.9" width="2" height="387.1" fill="#0a78ff"/>
<rect x="782.0" y="620" width="32.0" height="2" fill="#0a78ff"/>
<rect x="782.0" y="1007" width="32.0" height="2" fill="#0a78ff"/>
<rect x="782.0" y="940" width="32.0" height="2" fill="#0a78ff"/>
<rect x="782.0" y="847" width="32.0" height="2" fill="#0a78ff"/>
<rect x="782.0" y="780" width="32.0" height="2" fill="#0a78ff"/>
<rect x="782.0" y="713" width="32.0" height="2" fill="#0a78ff"/>
<rect x="814.0" y="860" width="494.0" height="2" fill="#0a78ff"/>
<rect x="814.0" y="874" width="173.5" height="1" fill="#151515"/>
<rect x="814.0" y="887" width="173.5" height="1" fill="#151515"/>
<rect x="814.0" y="901" width="173.5" height="1" fill="#151515"/>
<rect x="814.0" y="914" width="173.5" height="2" fill="#0a78ff"/>
<rect x="814.0" y="927" width="173.5" height="2" fill="#0a78ff"/>
<rect x="814.0" y="941" width="173.5" height="1" fill="#151515"/>
<rect x="814.0" y="954" width="173.5" height="1" fill="#151515"/>
<rect x="814.0" y="967" width="173.5" height="1" fill="#151515"/>
<rect x="814.0" y="981" width="173.5" height="1" fill="#151515"/>
<rect x="814.0" y="994" width="173.5" height="1" fill="#151515"/>
<rect x="832" y="861.2" width="2" height="66.8" fill="#0a78ff"/>
<rect x="859" y="861.2" width="2" height="146.8" fill="#0a78ff"/>
<rect x="920" y="861.2" width="2" height="146.8" fill="#0a78ff"/>
<rect x="960" y="861.2" width="2" height="146.8" fill="#0a78ff"/>
<rect x="987" y="861.2" width="2" height="146.8" fill="#0a78ff"/>
<rect x="987.5" y="900" width="320.4" height="2" fill="#0a78ff"/>
<rect x="987.5" y="967" width="320.4" height="2" fill="#0a78ff"/>
<rect x="1173" y="901.2" width="2" height="106.8" fill="#0a78ff"/>
<rect x="1174.5" y="914" width="133.5" height="2" fill="#0a78ff"/>
<rect x="1174.5" y="954" width="133.5" height="2" fill="#0a78ff"/>
<rect x="1214" y="901.2" width="2" height="53.4" fill="#0a78ff"/>
<rect x="1259" y="901.2" width="2" height="53.4" fill="#0a78ff"/>
<rect x="1227" y="954.6" width="2" height="13.3" fill="#0a78ff"/>
<rect x="1187" y="914.6" width="1" height="40.1" fill="#151515"/>
<rect x="1201" y="914.6" width="1" height="40.1" fill="#151515"/>
<text x="816.5" y="925.7" font-size="11.5" fill="#151515" stroke="#fdfdfb" stroke-width="0" font-style="italic" textLength="15.0" lengthAdjust="spacingAndGlyphs" >Изм.</text>
<text x="836.0" y="925.7" font-size="11.5" fill="#151515" stroke="#fdfdfb" stroke-width="0" font-style="italic" textLength="21.0" lengthAdjust="spacingAndGlyphs" >Лист</text>
<text x="869.0" y="925.7" font-size="11.5" fill="#151515" stroke="#fdfdfb" stroke-width="0" font-style="italic" textLength="43.0" lengthAdjust="spacingAndGlyphs" >№ докум.</text>
<text x="930.0" y="925.7" font-size="11.5" fill="#151515" stroke="#fdfdfb" stroke-width="0" font-style="italic" textLength="22.0" lengthAdjust="spacingAndGlyphs" >Подп.</text>
<text x="963.5" y="925.7" font-size="11.5" fill="#151515" stroke="#fdfdfb" stroke-width="0" font-style="italic" textLength="21.0" lengthAdjust="spacingAndGlyphs" >Дата</text>
<text x="817.0" y="939.1" font-size="11.5" fill="#151515" stroke="#fdfdfb" stroke-width="0" font-style="italic" textLength="31.0" lengthAdjust="spacingAndGlyphs" >Разраб.</text>
<text x="862.0" y="939.1" font-size="11.5" fill="#151515" stroke="#fdfdfb" stroke-width="0" font-style="italic" textLength="30.0" lengthAdjust="spacingAndGlyphs" >Иванов</text>
<text x="817.0" y="952.4" font-size="11.5" fill="#151515" stroke="#fdfdfb" stroke-width="0" font-style="italic" textLength="22.0" lengthAdjust="spacingAndGlyphs" >Пров.</text>
<text x="862.0" y="952.4" font-size="11.5" fill="#151515" stroke="#fdfdfb" stroke-width="0" font-style="italic" textLength="36.0" lengthAdjust="spacingAndGlyphs" >Волькин</text>
<text x="817.0" y="965.8" font-size="11.5" fill="#151515" stroke="#fdfdfb" stroke-width="0" font-style="italic" textLength="35.0" lengthAdjust="spacingAndGlyphs" >Т.контр.</text>
<text x="817.0" y="992.5" font-size="11.5" fill="#151515" stroke="#fdfdfb" stroke-width="0" font-style="italic" textLength="35.0" lengthAdjust="spacingAndGlyphs" >Н.контр.</text>
<text x="817.0" y="1005.8" font-size="11.5" fill="#151515" stroke="#fdfdfb" stroke-width="0" font-style="italic" textLength="18.0" lengthAdjust="spacingAndGlyphs" >Утв.</text>
<text x="1186.0" y="912.4" font-size="11.5" fill="#151515" stroke="#fdfdfb" stroke-width="0" font-style="italic" textLength="19.0" lengthAdjust="spacingAndGlyphs" >Лит.</text>
<text x="1224.0" y="912.4" font-size="11.5" fill="#151515" stroke="#fdfdfb" stroke-width="0" font-style="italic" textLength="25.0" lengthAdjust="spacingAndGlyphs" >Масса</text>
<text x="1263.0" y="912.4" font-size="11.5" fill="#151515" stroke="#fdfdfb" stroke-width="0" font-style="italic" textLength="41.0" lengthAdjust="spacingAndGlyphs" >Масштаб</text>
<text x="1179.0" y="965.8" font-size="11.5" fill="#151515" stroke="#fdfdfb" stroke-width="0" font-style="italic" textLength="22.0" lengthAdjust="spacingAndGlyphs" >Лист</text>
<text x="1237.0" y="965.8" font-size="11.5" fill="#151515" stroke="#fdfdfb" stroke-width="0" font-style="italic" textLength="32.0" lengthAdjust="spacingAndGlyphs" >Листов</text>
<text x="1291.0" y="965.8" font-size="11.5" fill="#151515" stroke="#fdfdfb" stroke-width="0" font-style="italic" >1</text>
<text x="1016.0" y="1019.0" font-size="11.5" fill="#151515" stroke="#fdfdfb" stroke-width="0" font-style="italic" textLength="45.0" lengthAdjust="spacingAndGlyphs" >Копировал</text>
<text x="1203.5" y="1019.0" font-size="11.5" fill="#151515" stroke="#fdfdfb" stroke-width="0" font-style="italic" textLength="35.0" lengthAdjust="spacingAndGlyphs" >Формат</text>
<text x="1256.0" y="1019.0" font-size="11.5" fill="#151515" stroke="#fdfdfb" stroke-width="0" font-style="italic" textLength="12.0" lengthAdjust="spacingAndGlyphs" >А4</text>
<text x="1074.0" y="889.7" font-size="21" fill="#151515" stroke="#fdfdfb" stroke-width="0.35" font-style="italic" textLength="145.0" lengthAdjust="spacingAndGlyphs" >ИГОЗ.XXXXX.002</text>
<text x="1081.0" y="922.4" font-size="14.5" fill="#151515" stroke="#fdfdfb" stroke-width="0.18" font-style="italic" text-anchor="middle" textLength="60.0" lengthAdjust="spacingAndGlyphs" >Деталь с</text>
<text x="1081.0" y="941.0" font-size="14.5" fill="#151515" stroke="#fdfdfb" stroke-width="0.18" font-style="italic" text-anchor="middle" textLength="76.0" lengthAdjust="spacingAndGlyphs" >внутренней</text>
<text x="1081.0" y="959.2" font-size="14.5" fill="#151515" stroke="#fdfdfb" stroke-width="0.18" font-style="italic" text-anchor="middle" textLength="52.0" lengthAdjust="spacingAndGlyphs" >резьбой</text>
<text x="991.0" y="996.4" font-size="21" fill="#151515" stroke="#fdfdfb" stroke-width="0.35" font-style="italic" textLength="177.5" lengthAdjust="spacingAndGlyphs" >Сталь 25  ГОСТ 1050-2013</text>
<text x="1238.0" y="941.0" font-size="15.5" fill="#151515" stroke="#fdfdfb" stroke-width="0.18" font-style="italic" text-anchor="middle" textLength="26.0" lengthAdjust="spacingAndGlyphs" >0,51</text>
<text x="1284.0" y="941.0" font-size="15.5" fill="#151515" stroke="#fdfdfb" stroke-width="0.18" font-style="italic" text-anchor="middle" textLength="15.0" lengthAdjust="spacingAndGlyphs" >1:1</text>
<text x="983.6" y="252.0" font-size="22" fill="#151515" stroke="#fdfdfb" stroke-width="0.35" font-style="italic" textLength="147.5" lengthAdjust="spacingAndGlyphs" transform="rotate(180 983.6 252.0)" >ИГОЗ.XXXXX.002</text>
<text x="792.5" y="974.6" font-size="11.5" fill="#151515" stroke="#fdfdfb" stroke-width="0" font-style="italic" text-anchor="middle" textLength="58.0" lengthAdjust="spacingAndGlyphs" transform="rotate(-90 792.5 974.6)" >Инв. № подл.</text>
<text x="792.5" y="894.5" font-size="11.5" fill="#151515" stroke="#fdfdfb" stroke-width="0" font-style="italic" text-anchor="middle" textLength="58.0" lengthAdjust="spacingAndGlyphs" transform="rotate(-90 792.5 894.5)" >Подп. и дата</text>
<text x="792.5" y="814.4" font-size="11.5" fill="#151515" stroke="#fdfdfb" stroke-width="0" font-style="italic" text-anchor="middle" textLength="58.0" lengthAdjust="spacingAndGlyphs" transform="rotate(-90 792.5 814.4)" >Взам. инв. №</text>
<text x="792.5" y="747.6" font-size="11.5" fill="#151515" stroke="#fdfdfb" stroke-width="0" font-style="italic" text-anchor="middle" textLength="58.0" lengthAdjust="spacingAndGlyphs" transform="rotate(-90 792.5 747.6)" >Инв. № дубл.</text>
<text x="792.5" y="667.5" font-size="11.5" fill="#151515" stroke="#fdfdfb" stroke-width="0" font-style="italic" text-anchor="middle" textLength="58.0" lengthAdjust="spacingAndGlyphs" transform="rotate(-90 792.5 667.5)" >Подп. и дата</text>
<text x="792.5" y="482.0" font-size="11.5" fill="#151515" stroke="#fdfdfb" stroke-width="0" font-style="italic" text-anchor="middle" textLength="40.0" lengthAdjust="spacingAndGlyphs" transform="rotate(-90 792.5 482.0)" >Справ. №</text>
<text x="792.5" y="322.0" font-size="11.5" fill="#151515" stroke="#fdfdfb" stroke-width="0" font-style="italic" text-anchor="middle" textLength="60.0" lengthAdjust="spacingAndGlyphs" transform="rotate(-90 792.5 322.0)" >Перв. примен.</text>
<path d="M1140.3 271.3 L1154.0 293.5 L1175.0 257.9 L1287.0 257.9" stroke="#0a78ff" stroke-width="1.6" fill="none" />
<text x="1176.0" y="289.0" font-size="22" fill="#151515" stroke="#fdfdfb" stroke-width="0.35" font-style="italic" textLength="52.0" lengthAdjust="spacingAndGlyphs" >Rz 40</text>
<text x="1236.0" y="289.0" font-size="22" fill="#151515" stroke="#fdfdfb" stroke-width="0.35" font-style="italic" textLength="7.0" lengthAdjust="spacingAndGlyphs" >(</text>
<text x="1269.0" y="289.0" font-size="22" fill="#151515" stroke="#fdfdfb" stroke-width="0.35" font-style="italic" textLength="7.0" lengthAdjust="spacingAndGlyphs" >)</text>
<path d="M1246.0 277.5 L1254.6 291.6 L1268.7 266.0" stroke="#151515" stroke-width="1" fill="none" />
<text x="834.0" y="840.2" font-size="15" fill="#151515" stroke="#fdfdfb" stroke-width="0.18" font-style="italic" textLength="66.0" lengthAdjust="spacingAndGlyphs" >H14, h14, ±</text>
<text x="911.0" y="829.3" font-size="15" fill="#151515" stroke="#fdfdfb" stroke-width="0.18" font-style="italic" textLength="23.0" lengthAdjust="spacingAndGlyphs" >IT14</text>
<rect x="907.0" y="833" width="25.0" height="1" fill="#151515"/>
<text x="912.0" y="847.7" font-size="15" fill="#151515" stroke="#fdfdfb" stroke-width="0.18" font-style="italic" textLength="9.5" lengthAdjust="spacingAndGlyphs" >2</text>
<text x="933.0" y="847.0" font-size="12" fill="#151515" stroke="#fdfdfb" stroke-width="0.18" font-style="italic" >.</text>
<clipPath id="cmain"><path d="M977.6 528.6 L1053.0 528.6 L1053.0 553.2 L1055.0 555.2 L1073.7 555.2 L1078.4 550.5 L1138.2 550.5 L1143.4 555.7 L1143.4 576.8 L1031.2 576.8 L1031.2 547.6 L977.6 547.6 Z"/></clipPath>
<g clip-path="url(#cmain)" stroke="#151515" stroke-width="1"><line x1="929.7" y1="528.6" x2="977.9" y2="576.8"/><line x1="940.9" y1="528.6" x2="989.1" y2="576.8"/><line x1="952.1" y1="528.6" x2="1000.3" y2="576.8"/><line x1="963.3" y1="528.6" x2="1011.5" y2="576.8"/><line x1="974.5" y1="528.6" x2="1022.7" y2="576.8"/><line x1="985.7" y1="528.6" x2="1033.9" y2="576.8"/><line x1="996.9" y1="528.6" x2="1045.1" y2="576.8"/><line x1="1008.1" y1="528.6" x2="1056.3" y2="576.8"/><line x1="1019.3" y1="528.6" x2="1067.5" y2="576.8"/><line x1="1030.5" y1="528.6" x2="1078.7" y2="576.8"/><line x1="1041.7" y1="528.6" x2="1089.9" y2="576.8"/><line x1="1052.9" y1="528.6" x2="1101.1" y2="576.8"/><line x1="1064.1" y1="528.6" x2="1112.3" y2="576.8"/><line x1="1075.3" y1="528.6" x2="1123.5" y2="576.8"/><line x1="1086.5" y1="528.6" x2="1134.7" y2="576.8"/><line x1="1097.7" y1="528.6" x2="1145.9" y2="576.8"/><line x1="1108.9" y1="528.6" x2="1157.1" y2="576.8"/><line x1="1120.1" y1="528.6" x2="1168.3" y2="576.8"/><line x1="1131.3" y1="528.6" x2="1179.5" y2="576.8"/><line x1="1142.5" y1="528.6" x2="1190.7" y2="576.8"/></g>
<rect x="972.7" y="438.6" width="176.5" height="144.0" stroke="#151515" stroke-width="1" fill="none" stroke-dasharray="2 2" rx="3"/>
<line x1="972.7" y1="510.3" x2="1150.0" y2="510.3" stroke="#151515" stroke-width="1" stroke-dasharray="56 3 2 3 20 3 2 3"/>
<rect x="1030.2" y="442" width="114.2" height="2" fill="#151515"/>
<rect x="1142" y="442.8" width="2" height="134.0" fill="#151515"/>
<rect x="1030.2" y="576" width="114.2" height="2" fill="#151515"/>
<rect x="1030" y="442.8" width="2" height="67.5" fill="#151515"/>
<line x1="1004.8" y1="472.6" x2="1031.2" y2="444.3" stroke="#151515" stroke-width="2" />
<rect x="976.6" y="472" width="54.6" height="2" fill="#151515"/>
<rect x="977" y="472.6" width="2" height="75.0" fill="#151515"/>
<rect x="1003.8" y="501" width="27.4" height="2" fill="#151515"/>
<rect x="1004" y="502.0" width="2" height="8.3" fill="#151515"/>
<rect x="977.6" y="528" width="75.4" height="2" fill="#151515"/>
<rect x="976.6" y="547" width="55.6" height="2" fill="#151515"/>
<rect x="1030" y="547.6" width="2" height="29.2" fill="#151515"/>
<line x1="1004.8" y1="547.6" x2="1031.2" y2="575.3" stroke="#151515" stroke-width="2" />
<path d="M1053 510.3 L1053 552.7 Q1053 555.2 1055.5 555.2 L1072.4 555.2 Q1073.9 555.2 1074.9 554.2 L1078.4 550.5" stroke="#151515" stroke-width="2" fill="none" />
<rect x="1077" y="510.3" width="2" height="40.2" fill="#151515"/>
<rect x="1077.4" y="550" width="61.8" height="2" fill="#151515"/>
<rect x="1137" y="510.3" width="2" height="40.2" fill="#151515"/>
<line x1="1138.2" y1="550.5" x2="1143.4" y2="555.7" stroke="#151515" stroke-width="2" />
<rect x="1075.4" y="554" width="68.0" height="1" fill="#151515"/>
<circle cx="1065.7" cy="539.6" r="26.6" stroke="#151515" stroke-width="1" fill="none" />
<path d="M1051.3 561.5 L1004.9 629.3 L977.0 629.3" stroke="#151515" stroke-width="1" fill="none" />
<text x="983.3" y="618.3" font-size="29.5" fill="#151515" stroke="#fdfdfb" stroke-width="0.35" textLength="14.5" lengthAdjust="spacingAndGlyphs" >А</text>
<rect x="977" y="352.5" width="1" height="120.1" fill="#151515"/>
<rect x="1143" y="352.5" width="1" height="90.3" fill="#151515"/>
<rect x="977.6" y="357" width="165.8" height="1" fill="#151515"/>
<polygon points="977.6,357.3 981.5,355.8 990.6,355.3 990.6,359.3 981.5,358.8" fill="#151515"/>
<polygon points="1143.4,357.3 1139.5,358.8 1130.4,359.3 1130.4,355.3 1139.5,355.8" fill="#151515"/>
<text x="1059.5" y="351.2" font-size="14.5" fill="#151515" stroke="#fdfdfb" stroke-width="0.18" font-style="italic" text-anchor="middle" textLength="15.0" lengthAdjust="spacingAndGlyphs" >62</text>
<rect x="1031" y="380.0" width="1" height="62.8" fill="#151515"/>
<rect x="977.6" y="385" width="53.6" height="1" fill="#151515"/>
<polygon points="977.6,385.2 981.5,383.7 990.6,383.2 990.6,387.2 981.5,386.7" fill="#151515"/>
<polygon points="1031.2,385.2 1027.3,386.7 1018.2,387.2 1018.2,383.2 1027.3,383.7" fill="#151515"/>
<text x="1003.5" y="378.6" font-size="14.5" fill="#151515" stroke="#fdfdfb" stroke-width="0.18" font-style="italic" text-anchor="middle" textLength="15.5" lengthAdjust="spacingAndGlyphs" >20</text>
<rect x="1004" y="410.0" width="1" height="62.6" fill="#151515"/>
<rect x="985.5" y="414" width="64.0" height="1" fill="#151515"/>
<polygon points="1004.8,414.2 1000.9,415.7 991.8,416.2 991.8,412.2 1000.9,412.7" fill="#151515"/>
<polygon points="1031.2,414.2 1035.1,412.7 1044.2,412.2 1044.2,416.2 1035.1,415.7" fill="#151515"/>
<text x="1017.5" y="409.4" font-size="14.5" fill="#151515" stroke="#fdfdfb" stroke-width="0.18" font-style="italic" text-anchor="middle" textLength="12.0" lengthAdjust="spacingAndGlyphs" >10</text>
<rect x="842.0" y="442" width="135.6" height="1" fill="#151515"/>
<rect x="842.0" y="576" width="189.2" height="1" fill="#151515"/>
<rect x="846" y="442.8" width="1" height="134.0" fill="#151515"/>
<polygon points="846.9,442.8 848.4,446.7 848.9,455.8 844.9,455.8 845.4,446.7" fill="#151515"/>
<polygon points="846.9,576.8 845.4,572.9 844.9,563.8 848.9,563.8 848.4,572.9" fill="#151515"/>
<text x="840.0" y="510.9" font-size="14.5" fill="#151515" stroke="#fdfdfb" stroke-width="0.18" font-style="italic" text-anchor="middle" textLength="24.0" lengthAdjust="spacingAndGlyphs" transform="rotate(-90 840.0 510.9)" >Ø50</text>
<rect x="865.5" y="472" width="112.1" height="1" fill="#151515"/>
<rect x="865.5" y="547" width="112.1" height="1" fill="#151515"/>
<rect x="870" y="472.6" width="1" height="75.0" fill="#151515"/>
<polygon points="870.4,472.6 871.9,476.5 872.4,485.6 868.4,485.6 868.9,476.5" fill="#151515"/>
<polygon points="870.4,547.6 868.9,543.7 868.4,534.6 872.4,534.6 871.9,543.7" fill="#151515"/>
<text x="864.0" y="508.9" font-size="14.5" fill="#151515" stroke="#fdfdfb" stroke-width="0.18" font-style="italic" text-anchor="middle" textLength="26.0" lengthAdjust="spacingAndGlyphs" transform="rotate(-90 864.0 508.9)" >Ø28</text>
<rect x="893.0" y="528" width="84.6" height="1" fill="#151515"/>
<rect x="897" y="501.8" width="1" height="26.8" fill="#151515"/>
<polygon points="897.8,528.6 896.3,524.7 895.8,515.6 899.8,515.6 899.3,524.7" fill="#151515"/>
<text x="892.0" y="512.5" font-size="14.5" fill="#151515" stroke="#fdfdfb" stroke-width="0.18" font-style="italic" text-anchor="middle" textLength="20.5" lengthAdjust="spacingAndGlyphs" transform="rotate(-90 892.0 512.5)" >Ø14</text>
<rect x="915.3" y="502" width="89.5" height="1" fill="#151515"/>
<rect x="920" y="502.0" width="1" height="16.3" fill="#151515"/>
<polygon points="920.0,502.0 921.5,505.9 922.0,515.0 918.0,515.0 918.5,505.9" fill="#151515"/>
<text x="914.0" y="511.7" font-size="14.5" fill="#151515" stroke="#fdfdfb" stroke-width="0.18" font-style="italic" text-anchor="middle" textLength="8.0" lengthAdjust="spacingAndGlyphs" transform="rotate(-90 914.0 511.7)" >6</text>
<rect x="1052" y="576.8" width="1" height="56.7" fill="#151515"/>
<rect x="1143" y="576.8" width="1" height="56.7" fill="#151515"/>
<rect x="1053.0" y="629" width="90.4" height="1" fill="#151515"/>
<polygon points="1052.4,629.3 1056.3,627.8 1065.4,627.3 1065.4,631.3 1056.3,630.8" fill="#151515"/>
<polygon points="1143.4,629.3 1139.5,630.8 1130.4,631.3 1130.4,627.3 1139.5,627.8" fill="#151515"/>
<text x="1095.7" y="622.8" font-size="14.5" fill="#151515" stroke="#fdfdfb" stroke-width="0.18" font-style="italic" text-anchor="middle" textLength="12.5" lengthAdjust="spacingAndGlyphs" >34</text>
<rect x="1138" y="576.8" width="1" height="31.2" fill="#151515"/>
<rect x="1074.0" y="603" width="87.6" height="1" fill="#151515"/>
<polygon points="1138.2,603.1 1134.3,604.6 1125.2,605.1 1125.2,601.1 1134.3,601.6" fill="#151515"/>
<polygon points="1143.4,603.1 1147.3,601.6 1156.4,601.1 1156.4,605.1 1147.3,604.6" fill="#151515"/>
<text x="1079.3" y="597.0" font-size="14.5" fill="#151515" stroke="#fdfdfb" stroke-width="0.18" font-style="italic" textLength="38.0" lengthAdjust="spacingAndGlyphs" >2×45°</text>
<rect x="1143.4" y="554" width="74.1" height="1" fill="#151515"/>
<rect x="1179" y="472.5" width="1" height="81.7" fill="#151515"/>
<polygon points="1179.5,554.2 1178.0,550.3 1177.5,541.2 1181.5,541.2 1181.0,550.3" fill="#151515"/>
<text x="1172.9" y="514.3" font-size="15" fill="#151515" stroke="#fdfdfb" stroke-width="0.18" font-style="italic" text-anchor="middle" textLength="38.3" lengthAdjust="spacingAndGlyphs" transform="rotate(-90 1172.9 514.3)" >M33×2</text>
<path d="M1201.3 541.1 L1209.0 554.0 L1222.3 531.5 L1268.0 531.5" stroke="#151515" stroke-width="1" fill="none" />
<text x="1223.2" y="548.5" font-size="14.5" fill="#151515" stroke="#fdfdfb" stroke-width="0.18" font-style="italic" textLength="37.4" lengthAdjust="spacingAndGlyphs" >Rz 20</text>
<rect x="1397.0" y="438.4" width="144.6" height="144.0" stroke="#151515" stroke-width="1" fill="none" stroke-dasharray="2 2"/>
<circle cx="1469.1" cy="510.2" r="66.7" stroke="#151515" stroke-width="2" fill="none" />
<circle cx="1469.1" cy="510.2" r="37.2" stroke="#151515" stroke-width="2" fill="none" />
<circle cx="1469.1" cy="510.2" r="19.0" stroke="#151515" stroke-width="2" fill="none" />
<rect x="1460" y="444.0" width="2" height="29.9" fill="#151515"/>
<rect x="1402.9" y="501" width="29.9" height="2" fill="#151515"/>
<rect x="1476" y="444.0" width="2" height="29.9" fill="#151515"/>
<rect x="1402.9" y="517" width="29.9" height="2" fill="#151515"/>
<rect x="1461.1" y="443" width="16.0" height="2" fill="#151515"/>
<rect x="1461.1" y="473" width="16.0" height="2" fill="#151515"/>
<rect x="1402" y="502.2" width="2" height="16.0" fill="#151515"/>
<rect x="1432" y="502.2" width="2" height="16.0" fill="#151515"/>
<rect x="1460" y="546.5" width="2" height="29.9" fill="#151515"/>
<rect x="1505.4" y="501" width="29.9" height="2" fill="#151515"/>
<rect x="1476" y="546.5" width="2" height="29.9" fill="#151515"/>
<rect x="1505.4" y="517" width="29.9" height="2" fill="#151515"/>
<rect x="1461.1" y="576" width="16.0" height="2" fill="#151515"/>
<rect x="1461.1" y="546" width="16.0" height="2" fill="#151515"/>
<rect x="1535" y="502.2" width="2" height="16.0" fill="#151515"/>
<rect x="1504" y="502.2" width="2" height="16.0" fill="#151515"/>
<clipPath id="cdet2" clip-path="url(#cdet)"><path d="M1116.1 715.7 L1153.2 715.7 L1153.2 770.8 A12 12 0 0 0 1165.2 782.8 L1204.0 782.8 Q1206.0 782.8 1207.3 781.5999999999999 L1216.8 772 L1253.5 772 L1253.5 813.0 L1116.1 813.0 Z"/></clipPath>
<g clip-path="url(#cdet2)" stroke="#151515" stroke-width="1"><line x1="1024.4" y1="715.7" x2="1119.7" y2="811.0"/><line x1="1035.6" y1="715.7" x2="1130.9" y2="811.0"/><line x1="1046.8" y1="715.7" x2="1142.1" y2="811.0"/><line x1="1058.0" y1="715.7" x2="1153.3" y2="811.0"/><line x1="1069.2" y1="715.7" x2="1164.5" y2="811.0"/><line x1="1080.4" y1="715.7" x2="1175.7" y2="811.0"/><line x1="1091.6" y1="715.7" x2="1186.9" y2="811.0"/><line x1="1102.8" y1="715.7" x2="1198.1" y2="811.0"/><line x1="1114.0" y1="715.7" x2="1209.3" y2="811.0"/><line x1="1125.2" y1="715.7" x2="1220.5" y2="811.0"/><line x1="1136.4" y1="715.7" x2="1231.7" y2="811.0"/><line x1="1147.6" y1="715.7" x2="1242.9" y2="811.0"/><line x1="1158.8" y1="715.7" x2="1254.1" y2="811.0"/><line x1="1170.0" y1="715.7" x2="1265.3" y2="811.0"/><line x1="1181.2" y1="715.7" x2="1276.5" y2="811.0"/><line x1="1192.4" y1="715.7" x2="1287.7" y2="811.0"/><line x1="1203.6" y1="715.7" x2="1298.9" y2="811.0"/><line x1="1214.8" y1="715.7" x2="1310.1" y2="811.0"/><line x1="1226.0" y1="715.7" x2="1321.3" y2="811.0"/><line x1="1237.2" y1="715.7" x2="1332.5" y2="811.0"/><line x1="1248.4" y1="715.7" x2="1343.7" y2="811.0"/></g>
<rect x="1112.5" y="672.5" width="144.3" height="143.8" stroke="#151515" stroke-width="1" fill="none" stroke-dasharray="2 2"/>
<circle cx="1184.8" cy="744.3" r="66.7" stroke="#151515" stroke-width="1" fill="none" />
<rect x="1079.5" y="782" width="80.5" height="1" fill="#151515"/>
<rect x="1210.4" y="779" width="31.6" height="1" fill="#151515"/>
<rect x="1206" y="697.5" width="1" height="85.3" fill="#151515"/>
<path d="M1153.2 685.6 L1153.2 770.8 A12 12 0 0 0 1165.2 782.8 L1204.0 782.8 Q1206.0 782.8 1207.3 781.5999999999999 L1216.8 772" stroke="#0a78ff" stroke-width="2" fill="none" />
<rect x="1216" y="685.8" width="2" height="86.2" fill="#0a78ff"/>
<rect x="1216.8" y="771" width="28.7" height="2" fill="#0a78ff"/>
<rect x="1124.5" y="715" width="28.7" height="2" fill="#0a78ff"/>
<text x="1144.8" y="664.7" font-size="29.5" fill="#1010ff" stroke="#fdfdfb" stroke-width="0.35" textLength="79.0" lengthAdjust="spacingAndGlyphs" >А(2,5:1)</text>
<rect x="1084" y="678.0" width="1" height="104.8" fill="#151515"/>
<polygon points="1084.7,782.3 1083.2,778.4 1082.7,769.3 1086.7,769.3 1086.2,778.4" fill="#151515"/>
<text x="1077.0" y="732.0" font-size="14.5" fill="#151515" stroke="#fdfdfb" stroke-width="0.18" font-style="italic" text-anchor="middle" textLength="24.0" lengthAdjust="spacingAndGlyphs" transform="rotate(-90 1077.0 732.0)" >Ø34</text>
<rect x="1153.2" y="703" width="53.3" height="1" fill="#151515"/>
<polygon points="1154.2,703.6 1158.1,702.1 1167.2,701.6 1167.2,705.6 1158.1,705.1" fill="#151515"/>
<polygon points="1206.5,703.6 1202.6,705.1 1193.5,705.6 1193.5,701.6 1202.6,702.1" fill="#151515"/>
<text x="1179.0" y="697.3" font-size="14.5" fill="#151515" stroke="#fdfdfb" stroke-width="0.18" font-style="italic" text-anchor="middle" textLength="8.0" lengthAdjust="spacingAndGlyphs" >8</text>
<line x1="1216.8" y1="772.0" x2="1255.5" y2="733.6" stroke="#151515" stroke-width="1" />
<rect x="1245.0" y="772" width="27.0" height="1" fill="#151515"/>
<path d="M1252.4 736.4 A50.4 50.4 0 0 1 1267.2 772" stroke="#151515" stroke-width="1" fill="none" />
<polygon points="1252.4,736.4 1256.4,737.6 1263.9,742.9 1261.4,746.0 1254.6,740.0" fill="#151515"/>
<polygon points="1267.2,772.0 1265.3,768.3 1263.9,759.3 1267.9,758.9 1268.3,768.0" fill="#151515"/>
<path d="M1259.6 745.2 L1266.4 729.1 L1301.7 729.1" stroke="#151515" stroke-width="1" fill="none" />
<text x="1273.4" y="722.4" font-size="14.5" fill="#151515" stroke="#fdfdfb" stroke-width="0.18" font-style="italic" textLength="22.0" lengthAdjust="spacingAndGlyphs" >45°</text>
<path d="M1166.6 769.3 L1110.9 825.4 L1078.4 825.4" stroke="#151515" stroke-width="1" fill="none" />
<polygon points="1157.6,778.7 1155.5,782.6 1148.5,789.6 1145.9,786.6 1153.5,780.4" fill="#151515"/>
<text x="1084.2" y="819.9" font-size="14.5" fill="#151515" stroke="#fdfdfb" stroke-width="0.18" font-style="italic" textLength="16.0" lengthAdjust="spacingAndGlyphs" >R2</text>
<path d="M1203.0 776.2 L1245.5 825.4 L1273.8 825.4" stroke="#151515" stroke-width="1" fill="none" />
<polygon points="1208.3,782.1 1212.0,784.0 1218.5,790.4 1215.5,793.1 1209.8,786.0" fill="#151515"/>
<text x="1253.0" y="819.9" font-size="14.5" fill="#151515" stroke="#fdfdfb" stroke-width="0.18" font-style="italic" textLength="14.5" lengthAdjust="spacingAndGlyphs" >R1</text>
<path d="M965.6 626.0 L965.6 669.2 L1008.0 669.2" stroke="#4a4a4a" stroke-width="1" fill="none" />
<path d="M965.6 625.0 L963.6 638.0 L967.6 638.0 Z" stroke="#4a4a4a" stroke-width="1" fill="none" />
<path d="M1009.0 669.2 L996.0 667.0 L996.0 671.4 Z" stroke="#4a4a4a" stroke-width="1" fill="none" />
<text x="964.5" y="623.0" font-size="11" fill="#4a4a4a" stroke="#fdfdfb" stroke-width="0" >Y</text>
<text x="1010.0" y="669.0" font-size="11" fill="#4a4a4a" stroke="#fdfdfb" stroke-width="0" >X</text>
</g></svg>
</body></html>
